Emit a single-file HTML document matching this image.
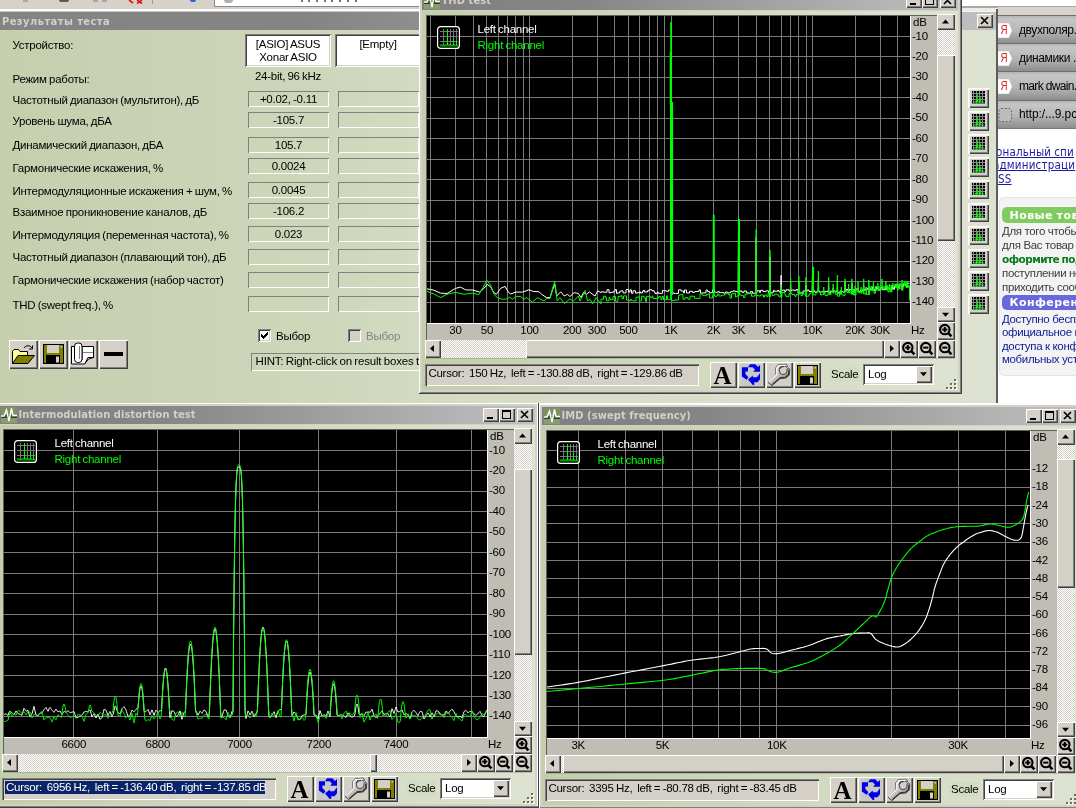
<!DOCTYPE html><html><head><meta charset="utf-8"><title>RMAA</title><style>
html,body{margin:0;padding:0;overflow:hidden;}
body{width:1076px;height:808px;overflow:hidden;position:relative;background:#d8dfc8;font-family:"Liberation Sans",sans-serif;font-size:11px;color:#000;}
div{position:absolute;box-sizing:border-box;}
svg{position:absolute;overflow:hidden;}
.t{white-space:pre;line-height:13px;font-size:11.5px;letter-spacing:-0.25px;word-spacing:-0.6px;}
.tb{white-space:pre;font-family:"DejaVu Sans Condensed","DejaVu Sans",sans-serif;font-weight:bold;font-size:11px;line-height:14px;color:#d4d0c8;}
.btn{background:#d4d0c8;box-shadow:inset 1px 1px 0 #fff,inset -1px -1px 0 #404040,inset -2px -2px 0 #808080;}
.sunk{box-shadow:inset 1px 1px 0 #808080,inset -1px -1px 0 #fff,inset 2px 2px 0 #404040,inset -2px -2px 0 #d4d0c8;}
.sunk1{box-shadow:inset 1px 1px 0 #808080,inset -1px -1px 0 #fff;}
.dith{background-color:#e9e7e3;background-image:conic-gradient(#fff 25%,#d4d0c8 0 50%,#fff 0 75%,#d4d0c8 0);background-size:2px 2px;}
.lab{white-space:pre;font-size:11px;line-height:13px;color:#000;}
</style></head><body><div id="root" style="left:0;top:0;width:1076px;height:808px;overflow:hidden;will-change:transform">
<div style="left:0px;top:0px;width:997px;height:12px;background:#d6d2ca"></div>
<div style="left:0px;top:9px;width:997px;height:2px;background:#fff"></div>
<div style="left:0px;top:11px;width:997px;height:1px;background:#c8c8c0"></div>
<div style="left:214px;top:0px;width:210px;height:7px;background:#fff;border:1px solid #8a8a8a;border-top:none"></div>
<div style="left:224px;top:0px;width:9px;height:3px;background:#b0b0b0;border-radius:0 0 5px 5px"></div>
<div style="left:301px;top:0px;width:2px;height:2px;background:#777"></div>
<div style="left:308px;top:0px;width:2px;height:2px;background:#777"></div>
<div style="left:316px;top:0px;width:2px;height:2px;background:#777"></div>
<div style="left:324px;top:0px;width:2px;height:2px;background:#777"></div>
<div style="left:331px;top:0px;width:2px;height:2px;background:#777"></div>
<div style="left:339px;top:0px;width:2px;height:2px;background:#777"></div>
<div style="left:347px;top:0px;width:2px;height:2px;background:#777"></div>
<div style="left:355px;top:0px;width:2px;height:2px;background:#777"></div>
<div style="left:23px;top:0px;width:5px;height:2px;background:#a8a8a8"></div>
<div style="left:59px;top:0px;width:10px;height:2px;background:#5a5a50;border-radius:0 0 5px 5px"></div>
<div style="left:93px;top:0px;width:5px;height:2px;background:#a8a8a8"></div>
<div style="left:102px;top:0px;width:5px;height:2px;background:#a8a8a8"></div>
<svg style="left:128px;top:0px" width="16" height="4" viewBox="0 0 16 4" ><path d="M1,0 L5,3 M9,0 L14,3.5 M14,0 L9,3.5" stroke="#e01010" stroke-width="1.6" fill="none"/></svg>
<div style="left:152px;top:0px;width:1px;height:4px;background:#9a9a9a"></div>
<div style="left:190px;top:0px;width:6px;height:2px;background:#3060e0;border-radius:0 0 3px 3px"></div>
<div style="left:0px;top:30px;width:997px;height:374px;background:linear-gradient(90deg,#c5cfae 0px,#cdd6b9 300px,#d6ddc5 500px,#dde2d0 997px)"></div>
<div style="left:0px;top:12px;width:997px;height:18px;background:linear-gradient(90deg,#848484 0px,#848484 300px,#c0c0c0 997px)"></div>
<div class="tb" style="left:2px;top:14.5px;letter-spacing:0.45px">Результаты теста</div>
<div class="btn" style="left:977px;top:14px;width:16px;height:14px;"></div><svg style="left:977px;top:14px" width="16" height="14" viewBox="0 0 16 14" ><path d="M4,3 L11,10 M11,3 L4,10" stroke="#000" stroke-width="1.6"/></svg>
<div style="left:0px;top:403px;width:1076px;height:2px;background:#fff"></div>
<div class="t" style="left:12.5px;top:39px;">Устройство:</div>
<div class="t" style="left:12.5px;top:73px;">Режим работы:</div>
<div class="t" style="left:12.5px;top:94px;">Частотный диапазон (мультитон), дБ</div>
<div class="t" style="left:12.5px;top:115px;">Уровень шума, дБА</div>
<div class="t" style="left:12.5px;top:139px;">Динамический диапазон, дБА</div>
<div class="t" style="left:12.5px;top:162px;">Гармонические искажения, %</div>
<div class="t" style="left:12.5px;top:185px;">Интермодуляционные искажения + шум, %</div>
<div class="t" style="left:12.5px;top:206px;">Взаимное проникновение каналов, дБ</div>
<div class="t" style="left:12.5px;top:229px;">Интермодуляция (переменная частота), %</div>
<div class="t" style="left:12.5px;top:251px;">Частотный диапазон (плавающий тон), дБ</div>
<div class="t" style="left:12.5px;top:274px;">Гармонические искажения (набор частот)</div>
<div class="t" style="left:12.5px;top:299px;">THD (swept freq.), %</div>
<div class="sunk" style="left:245px;top:34px;width:86px;height:33px;background:#fff"></div>
<div class="t" style="left:245px;top:38px;width:86px;text-align:center">[ASIO] ASUS
Xonar ASIO</div>
<div class="sunk" style="left:335px;top:34px;width:86px;height:33px;background:#fff"></div>
<div class="t" style="left:335px;top:38px;width:86px;text-align:center">[Empty]</div>
<div class="t" style="left:245px;top:70px;width:86px;text-align:center">24-bit, 96 kHz</div>
<div class="sunk1" style="left:248px;top:91px;width:81px;height:16px;"></div>
<div class="t" style="left:248px;top:93px;width:81px;text-align:center">+0.02, -0.11</div>
<div class="sunk1" style="left:338px;top:91px;width:81px;height:16px;"></div>
<div class="sunk1" style="left:248px;top:112px;width:81px;height:16px;"></div>
<div class="t" style="left:248px;top:114px;width:81px;text-align:center">-105.7</div>
<div class="sunk1" style="left:338px;top:112px;width:81px;height:16px;"></div>
<div class="sunk1" style="left:248px;top:137px;width:81px;height:16px;"></div>
<div class="t" style="left:248px;top:139px;width:81px;text-align:center">105.7</div>
<div class="sunk1" style="left:338px;top:137px;width:81px;height:16px;"></div>
<div class="sunk1" style="left:248px;top:158px;width:81px;height:16px;"></div>
<div class="t" style="left:248px;top:160px;width:81px;text-align:center">0.0024</div>
<div class="sunk1" style="left:338px;top:158px;width:81px;height:16px;"></div>
<div class="sunk1" style="left:248px;top:182px;width:81px;height:16px;"></div>
<div class="t" style="left:248px;top:184px;width:81px;text-align:center">0.0045</div>
<div class="sunk1" style="left:338px;top:182px;width:81px;height:16px;"></div>
<div class="sunk1" style="left:248px;top:203px;width:81px;height:16px;"></div>
<div class="t" style="left:248px;top:205px;width:81px;text-align:center">-106.2</div>
<div class="sunk1" style="left:338px;top:203px;width:81px;height:16px;"></div>
<div class="sunk1" style="left:248px;top:226px;width:81px;height:16px;"></div>
<div class="t" style="left:248px;top:228px;width:81px;text-align:center">0.023</div>
<div class="sunk1" style="left:338px;top:226px;width:81px;height:16px;"></div>
<div class="sunk1" style="left:248px;top:249px;width:81px;height:16px;"></div>
<div class="sunk1" style="left:338px;top:249px;width:81px;height:16px;"></div>
<div class="sunk1" style="left:248px;top:272px;width:81px;height:16px;"></div>
<div class="sunk1" style="left:338px;top:272px;width:81px;height:16px;"></div>
<div class="sunk1" style="left:248px;top:296px;width:81px;height:16px;"></div>
<div class="sunk1" style="left:338px;top:296px;width:81px;height:16px;"></div>
<div class="sunk" style="left:258px;top:329px;width:13px;height:13px;background:#fff"></div>
<svg style="left:258px;top:329px" width="13" height="13" viewBox="0 0 13 13" ><path d="M3.5,5.5 L5.5,7.5 L9.5,3.5 M3.5,6.5 L5.5,8.5 L9.5,4.5 M3.5,7.5 L5.5,9.5 L9.5,5.5" stroke="#000" stroke-width="1" fill="none" shape-rendering="crispEdges"/></svg>
<div class="t" style="left:276px;top:330px;">Выбор</div>
<div class="sunk" style="left:348px;top:329px;width:13px;height:13px;background:#d4d0c8"></div>
<div class="t" style="left:366px;top:330px;color:#848484">Выбор</div>
<div class="sunk1" style="left:251px;top:353px;width:200px;height:18px;"></div>
<div class="t" style="left:255.5px;top:355px;letter-spacing:-0.17px">HINT: Right-click on result boxes to</div>
<div class="btn" style="left:9px;top:340px;width:29px;height:29px;"></div>
<div class="btn" style="left:39px;top:340px;width:29px;height:29px;"></div>
<div class="btn" style="left:69px;top:340px;width:29px;height:29px;"></div>
<div class="btn" style="left:99px;top:340px;width:29px;height:29px;"></div>
<svg style="left:11px;top:343px" width="25" height="23" viewBox="0 0 25 23" ><path d="M13,5 C15,2 19,2 21,5" fill="none" stroke="#000" stroke-width="1"/><path d="M21.5,2.5 L21.5,6 L18,6" fill="none" stroke="#000" stroke-width="1"/><path d="M1.5,20.5 L1.5,8.5 L3,6.5 L7.5,6.5 L9,8.5 L16.5,8.5 L16.5,12" fill="#ffff99" stroke="#000" stroke-width="1"/><path d="M1.5,20.5 L7,12.5 L23.5,12.5 L17,20.5 Z" fill="#808000" stroke="#000" stroke-width="1"/></svg>
<svg style="left:43px;top:344px" width="21" height="20" viewBox="0 0 21 20"><rect x="0.5" y="0.5" width="20" height="19" fill="#808000" stroke="#000" stroke-width="1"/><rect x="4" y="1" width="12" height="8" fill="#d4d0c8"/><rect x="3" y="11" width="14" height="8.5" fill="#000"/><rect x="13" y="12.5" width="3" height="6" fill="#d4d0c8"/><rect x="17.5" y="2" width="1.5" height="1.5" fill="#d4d0c8"/></svg>
<svg style="left:69px;top:340px" width="29" height="29" viewBox="0 0 29 29" ><path d="M2.5,6.5 L24.5,6.5 L24.5,17.5 L19.5,19 L15.5,24 L2.5,24 Z" fill="#fff" stroke="#000" stroke-width="1"/><path d="M24.5,17.5 L19,17.5 L16,23.5" fill="none" stroke="#000" stroke-width="1"/><line x1="13" y1="12.5" x2="24" y2="12.5" stroke="#808080"/><line x1="13.5" y1="7" x2="13.5" y2="20" stroke="#808080"/><rect x="5.5" y="3" width="7.5" height="19.5" rx="3.2" ry="3.2" fill="#fff" stroke="#000" stroke-width="1"/><line x1="10.5" y1="6" x2="10.5" y2="19" stroke="#808080"/></svg>
<div style="left:104px;top:352px;width:19px;height:4px;background:#000"></div>
<div style="left:419px;top:-11px;width:543px;height:405px;background:linear-gradient(90deg,#c3ceab 0%,#d0d8bc 45%,#dde3d1 100%)"></div><div style="left:419px;top:-11px;width:543px;height:1px;background:#fff"></div><div style="left:419px;top:-10px;width:542px;height:2px;background:#d4d0c8"></div><div style="left:419px;top:-11px;width:1px;height:405px;background:#fff"></div><div style="left:420px;top:-10px;width:2px;height:403px;background:#d4d0c8"></div><div style="left:961px;top:-11px;width:1px;height:405px;background:#404040"></div><div style="left:960px;top:-10px;width:1px;height:404px;background:#808080"></div><div style="left:958px;top:-10px;width:2px;height:403px;background:#d4d0c8"></div><div style="left:419px;top:393px;width:543px;height:1px;background:#404040"></div><div style="left:420px;top:392px;width:541px;height:1px;background:#808080"></div><div style="left:421px;top:390px;width:538px;height:2px;background:#d4d0c8"></div><div style="left:422px;top:-8px;width:536px;height:18px;background:linear-gradient(90deg,#808080 0%,#858585 30%,#c0c0c0 100%)"></div><div style="left:422px;top:10px;width:536px;height:1px;background:#d4d0c8"></div><svg style="left:424px;top:-7px" width="16" height="16" viewBox="0 0 16 16" ><rect width="16" height="16" fill="#7d9263"/><rect y="8" width="16" height="2" fill="#4b5f35"/><rect y="10" width="16" height="1" fill="#2f4020"/><rect y="11" width="16" height="5" fill="#889c6c"/><polyline points="0,9 3,9 5.5,3 8,14 10.5,1.5 12,8.5 16,8.5" fill="none" stroke="#fff" stroke-width="1.4" stroke-linejoin="miter"/></svg><div class="tb" style="left:441.5px;top:-6px;letter-spacing:0.1px">THD test</div><div class="btn" style="left:906px;top:-6px;width:16px;height:14px;"></div><svg style="left:906px;top:-6px" width="16" height="14" viewBox="0 0 16 14" ><rect x="4" y="9" width="6" height="2" fill="#000"/></svg><div class="btn" style="left:922px;top:-6px;width:16px;height:14px;"></div><svg style="left:922px;top:-6px" width="16" height="14" viewBox="0 0 16 14" ><rect x="3.5" y="2.5" width="8" height="8" fill="none" stroke="#000" stroke-width="1"/><rect x="3" y="2" width="9" height="2" fill="#000"/></svg><div class="btn" style="left:940px;top:-6px;width:16px;height:14px;"></div><svg style="left:940px;top:-6px" width="16" height="14" viewBox="0 0 16 14" ><path d="M4,3 L11,10 M11,3 L4,10" stroke="#000" stroke-width="1.6"/></svg><div style="left:426px;top:15px;width:511px;height:326px;background:#c0bdb5;border-top:1px solid #606060;border-left:1px solid #606060"></div><div style="left:427px;top:16px;width:483px;height:307px;background:#000"></div><div style="left:910px;top:16px;width:1px;height:308px;background:#fff"></div><div style="left:427px;top:323px;width:483px;height:1px;background:#fff"></div><svg style="left:427px;top:16px" width="483" height="307" viewBox="0 0 483 307" ><g transform="translate(-427,-16)"><g shape-rendering="crispEdges" stroke="#7a7a7a" stroke-width="1"><line x1="430.5" y1="16" x2="430.5" y2="323"/><line x1="455.5" y1="16" x2="455.5" y2="323"/><line x1="473.5" y1="16" x2="473.5" y2="323"/><line x1="486.5" y1="16" x2="486.5" y2="323"/><line x1="498.5" y1="16" x2="498.5" y2="323"/><line x1="507.5" y1="16" x2="507.5" y2="323"/><line x1="515.5" y1="16" x2="515.5" y2="323"/><line x1="523.5" y1="16" x2="523.5" y2="323"/><line x1="529.5" y1="16" x2="529.5" y2="323"/><line x1="572.5" y1="16" x2="572.5" y2="323"/><line x1="597.5" y1="16" x2="597.5" y2="323"/><line x1="614.5" y1="16" x2="614.5" y2="323"/><line x1="628.5" y1="16" x2="628.5" y2="323"/><line x1="639.5" y1="16" x2="639.5" y2="323"/><line x1="649.5" y1="16" x2="649.5" y2="323"/><line x1="657.5" y1="16" x2="657.5" y2="323"/><line x1="664.5" y1="16" x2="664.5" y2="323"/><line x1="671.5" y1="16" x2="671.5" y2="323"/><line x1="713.5" y1="16" x2="713.5" y2="323"/><line x1="738.5" y1="16" x2="738.5" y2="323"/><line x1="756.5" y1="16" x2="756.5" y2="323"/><line x1="769.5" y1="16" x2="769.5" y2="323"/><line x1="781.5" y1="16" x2="781.5" y2="323"/><line x1="790.5" y1="16" x2="790.5" y2="323"/><line x1="798.5" y1="16" x2="798.5" y2="323"/><line x1="806.5" y1="16" x2="806.5" y2="323"/><line x1="812.5" y1="16" x2="812.5" y2="323"/><line x1="855.5" y1="16" x2="855.5" y2="323"/><line x1="880.5" y1="16" x2="880.5" y2="323"/><line x1="897.5" y1="16" x2="897.5" y2="323"/><line x1="427" y1="36.5" x2="910" y2="36.5"/><line x1="427" y1="56.5" x2="910" y2="56.5"/><line x1="427" y1="77.5" x2="910" y2="77.5"/><line x1="427" y1="97.5" x2="910" y2="97.5"/><line x1="427" y1="118.5" x2="910" y2="118.5"/><line x1="427" y1="138.5" x2="910" y2="138.5"/><line x1="427" y1="159.5" x2="910" y2="159.5"/><line x1="427" y1="179.5" x2="910" y2="179.5"/><line x1="427" y1="200.5" x2="910" y2="200.5"/><line x1="427" y1="220.5" x2="910" y2="220.5"/><line x1="427" y1="241.5" x2="910" y2="241.5"/><line x1="427" y1="261.5" x2="910" y2="261.5"/><line x1="427" y1="281.5" x2="910" y2="281.5"/><line x1="427" y1="302.5" x2="910" y2="302.5"/></g><polyline points="427.0,288.8 433.7,290.1 440.4,293.1 447.0,293.5 455.5,288.4 460.5,287.1 465.5,289.8 473.0,290.1 479.7,292.1 483.9,288.4 487.2,284.3 490.6,286.8 493.9,292.6 496.4,294.3 500.6,288.4 505.1,286.4 508.1,291.8 510.7,294.0 515.7,292.1 522.4,292.1 529.0,289.8 533.2,291.4 539.1,291.8 541.6,294.3 546.6,297.6 550.0,297.6 552.5,290.1 554.7,284.3 556.7,296.0 560.8,291.8 564.2,296.0 567.5,294.3 570.0,296.5 574.2,292.6 578.4,293.5 580.9,297.6 583.4,292.6 586.8,294.3 589.3,291.8 592.6,294.3 595.1,296.0 597.6,290.9 601.0,292.6 601.0,291.9 604.0,291.9 604.0,292.2 607.0,292.2 607.0,289.7 609.0,289.7 609.0,292.8 611.0,292.8 611.0,292.3 613.5,292.3 613.5,291.4 615.0,291.4 615.0,289.6 616.5,289.6 616.5,293.4 617.5,293.4 617.5,292.9 619.5,292.9 619.5,291.7 620.5,291.7 620.5,290.9 623.0,290.9 623.0,292.9 626.0,292.9 626.0,289.6 628.5,289.6 628.5,292.0 630.0,292.0 630.0,289.9 631.5,289.9 631.5,293.3 633.0,293.3 633.0,290.8 635.5,290.8 635.5,293.1 637.5,293.1 637.5,292.7 639.5,292.7 639.5,291.9 640.5,291.9 640.5,293.0 642.5,293.0 642.5,291.2 643.5,291.2 643.5,290.3 644.5,290.3 644.5,292.0 647.5,292.0 647.5,290.8 649.0,290.8 649.0,289.8 652.0,289.8 652.0,290.7 654.0,290.7 654.0,292.0 655.0,292.0 655.0,293.6 657.0,293.6 657.0,292.4 658.5,292.4 658.5,293.5 659.5,293.5 659.5,293.3 662.5,293.3 662.5,290.4 663.5,290.4 663.5,290.8 666.5,290.8 666.5,291.3 668.5,291.3 668.5,290.0 671.0,290.0 671.0,292.8 670.7,292.8 671.0,100.0 671.3,292.8 672.0,292.8 672.0,292.9 674.0,292.9 674.0,293.5 675.5,293.5 675.5,293.4 678.5,293.4 678.5,289.8 681.0,289.8 681.0,291.0 683.5,291.0 683.5,292.9 684.5,292.9 684.5,290.0 686.5,290.0 686.5,293.0 689.5,293.0 689.5,291.3 692.5,291.3 692.5,292.3 695.0,292.3 695.0,291.4 697.0,291.4 697.0,291.4 699.0,291.4 699.0,289.9 700.5,289.9 700.5,293.1 703.5,293.1 703.5,292.8 706.0,292.8 706.0,290.0 707.5,290.0 707.5,291.6 709.5,291.6 709.5,292.8 712.5,292.8 712.5,289.9 713.3,289.9 713.6,221.1 713.9,289.9 714.5,289.9 714.5,292.2 716.5,292.2 716.5,292.4 717.5,292.4 717.5,291.7 719.5,291.7 719.5,292.7 721.5,292.7 721.5,292.5 723.5,292.5 723.5,293.1 725.5,293.1 725.5,292.0 727.5,292.0 727.5,292.8 730.5,292.8 730.5,291.7 733.0,291.7 733.0,290.9 735.0,290.9 735.0,291.4 737.0,291.4 737.0,292.0 738.2,292.0 738.5,224.0 738.8,292.0 740.0,292.0 740.0,291.0 742.0,291.0 742.0,292.3 744.0,292.3 744.0,291.0 746.5,291.0 746.5,292.8 748.0,292.8 748.0,293.2 750.5,293.2 750.5,291.6 752.5,291.6 752.5,293.2 755.5,293.2 755.5,292.7 755.9,292.7 756.2,237.2 756.5,292.7 757.0,292.7 757.0,290.7 759.5,290.7 759.5,292.3 760.5,292.3 760.5,290.3 763.0,290.3 763.0,291.6 766.0,291.6 766.0,290.8 768.5,290.8 768.5,292.5 769.6,292.5 769.9,256.7 770.2,292.5 771.5,292.5 771.5,292.3 773.5,292.3 773.5,290.4 774.5,290.4 774.5,291.3 777.5,291.3 777.5,290.5 779.0,290.5 779.0,292.0 780.5,292.0 780.5,293.2 780.8,293.2 781.1,275.3 781.4,293.2 781.5,293.2 781.5,290.3 783.0,290.3 783.0,290.1 784.5,290.1 784.5,291.4 786.0,291.4 786.0,289.8 789.0,289.8 789.0,291.0 790.3,291.0 790.6,281.3 790.9,291.0 791.5,291.0 791.5,290.0 794.5,290.0 794.5,290.6 796.0,290.6 796.0,289.7 798.0,289.7 798.0,293.1 798.5,293.1 798.8,281.3 799.1,293.1 800.5,293.1 800.5,292.8 803.0,292.8 803.0,291.0 806.0,291.0 806.0,291.7 805.7,291.7 806.0,284.9 806.3,291.7 807.0,291.7 807.0,290.1 809.0,290.1 809.0,291.5 812.0,291.5 812.0,290.8 812.2,290.8 812.5,272.1 812.8,290.8 815.0,290.8 815.0,292.6 817.0,292.6 817.0,291.2 818.1,291.2 818.4,278.5 818.7,291.2 819.5,291.2 819.5,292.0 822.5,292.0 822.5,291.4 823.4,291.4 823.7,290.6 824.0,291.4 824.5,291.4 824.5,291.8 826.0,291.8 826.0,291.4 828.3,291.4 828.6,282.5 828.9,291.4 829.0,291.4 829.0,293.2 830.5,293.2 830.5,291.1 831.5,291.1 831.5,291.2 832.5,291.2 832.5,291.8 832.9,291.8 833.2,288.2 833.5,291.8 834.0,291.8 834.0,290.9 835.0,290.9 835.0,291.3 837.0,291.3 837.0,291.5 837.1,291.5 837.4,280.7 837.7,291.5 838.0,291.5 838.0,293.1 840.0,293.1 840.0,291.0 842.0,291.0 842.0,291.7 843.0,291.7 843.0,292.1 844.5,292.1 844.5,291.2 844.8,291.2 845.1,282.0 845.4,291.2 846.0,291.2 846.0,289.4 848.0,289.4 848.0,291.0 848.3,291.0 848.6,288.1 848.9,291.0 849.5,291.0 849.5,289.7 851.0,289.7 851.0,289.5 851.6,289.5 851.9,283.3 852.2,289.5 852.0,289.5 852.0,289.9 854.0,289.9 854.0,291.7 855.0,291.7 855.0,288.9 857.0,288.9 857.0,289.6 857.8,289.6 858.1,288.3 858.4,289.6 858.5,289.6 858.5,291.4 860.5,291.4 860.5,290.2 861.5,290.2 861.5,291.2 862.5,291.2 862.5,289.1 863.4,289.1 863.7,285.9 864.0,289.1 864.0,289.1 864.0,290.1 866.0,290.1 866.0,287.6 867.0,287.6 867.0,288.8 868.0,288.8 868.0,290.2 868.5,290.2 868.8,286.1 869.1,290.2 869.5,290.2 869.5,289.3 870.5,289.3 870.5,290.2 870.9,290.2 871.2,289.6 871.5,290.2 872.0,290.2 872.0,287.1 873.0,287.1 873.0,289.4 873.2,289.4 873.5,284.5 873.8,289.4 874.5,289.4 874.5,290.8 875.5,290.8 875.5,286.7 876.5,286.7 876.5,289.3 877.6,289.3 877.9,287.0 878.2,289.3 878.5,289.3 878.5,290.3 879.7,290.3 880.0,290.1 880.3,290.3 880.5,290.3 880.5,288.3 881.7,288.3 882.0,286.8 882.3,288.3 882.5,288.3 882.5,290.0 883.5,290.0 883.5,289.6 885.5,289.6 885.5,286.9 885.6,286.9 885.9,285.9 886.2,286.9 886.5,286.9 886.5,288.6 887.5,288.6 887.5,288.0 889.5,288.0 889.5,289.3 891.5,289.3 891.5,285.6 892.5,285.6 892.5,289.2 892.6,289.2 892.9,287.0 893.2,289.2 894.5,289.2 894.5,286.4 895.5,286.4 895.5,284.6 896.5,284.6 896.5,285.4 897.5,285.4 897.5,287.7 898.5,287.7 898.5,285.4 899.5,285.4 899.5,288.3 900.4,288.3 900.7,288.0 901.0,288.3 901.5,288.3 901.5,286.8 901.8,286.8 902.1,284.8 902.4,286.8 903.5,286.8 903.5,283.8 904.5,283.8 904.5,284.1 905.5,284.1 905.5,286.2 906.0,286.2 906.3,285.3 906.6,286.2 906.5,286.2 906.5,287.4 907.5,287.4 907.5,283.3 909.5,283.3" fill="none" stroke="#fff" stroke-width="1" stroke-linejoin="round"/><polyline points="427.0,291.3 434.5,294.3 440.7,297.6 447.0,294.3 455.5,292.3 463.8,294.3 472.2,293.1 478.9,294.6 483.0,287.6 486.9,280.4 490.6,285.1 493.9,294.3 497.3,297.6 502.3,299.3 506.5,299.0 509.8,297.1 512.3,299.3 515.7,296.3 520.7,296.5 524.0,299.3 526.5,297.6 532.4,302.2 537.4,297.6 544.1,301.0 546.6,298.5 550.0,298.5 552.5,288.4 554.7,281.7 557.2,301.0 560.0,297.6 564.5,303.5 570.0,298.8 573.4,301.3 578.4,296.0 580.1,301.0 582.6,296.0 585.1,290.4 587.6,301.0 590.1,299.3 592.6,303.8 596.0,297.6 601.0,303.8 601.0,299.2 603.5,299.2 603.5,296.3 605.5,296.3 605.5,297.5 606.5,297.5 606.5,300.9 609.0,300.9 609.0,297.5 610.0,297.5 610.0,299.7 613.0,299.7 613.0,296.5 615.5,296.5 615.5,301.2 618.0,301.2 618.0,296.4 620.5,296.4 620.5,295.8 622.0,295.8 622.0,298.5 623.5,298.5 623.5,295.9 626.5,295.9 626.5,300.2 629.0,300.2 629.0,301.0 630.0,301.0 630.0,299.5 631.5,299.5 631.5,300.8 634.0,300.8 634.0,301.0 636.0,301.0 636.0,297.2 638.5,297.2 638.5,296.7 639.5,296.7 639.5,300.8 640.5,300.8 640.5,300.9 641.5,300.9 641.5,296.3 644.0,296.3 644.0,298.0 645.5,298.0 645.5,301.3 646.5,301.3 646.5,296.2 647.5,296.2 647.5,296.7 650.5,296.7 650.5,297.5 652.0,297.5 652.0,296.3 653.0,296.3 653.0,298.5 654.0,298.5 654.0,298.5 657.0,298.5 657.0,298.0 658.5,298.0 658.5,296.7 661.0,296.7 661.0,299.7 662.0,299.7 662.0,296.5 663.5,296.5 663.5,299.8 666.5,299.8 666.5,295.8 667.5,295.8 667.5,299.6 670.5,299.6 670.5,300.0 670.7,300.0 671.0,22.0 671.3,300.0 672.0,300.0 672.0,300.6 675.0,300.6 675.0,299.7 676.0,299.7 676.0,300.1 678.5,300.1 678.5,295.3 680.0,295.3 680.0,294.6 683.0,294.6 683.0,299.3 685.0,299.3 685.0,297.7 688.0,297.7 688.0,299.2 689.0,299.2 689.0,299.2 690.0,299.2 690.0,296.2 693.0,296.2 693.0,296.3 694.5,296.3 694.5,298.3 697.5,298.3 697.5,298.5 700.0,298.5 700.0,293.6 702.0,293.6 702.0,295.1 703.0,295.1 703.0,295.3 705.5,295.3 705.5,295.5 706.5,295.5 706.5,294.4 708.5,294.4 708.5,293.9 709.5,293.9 709.5,297.9 712.5,297.9 712.5,295.4 713.3,295.4 713.6,214.4 713.9,295.4 715.0,295.4 715.0,296.5 716.5,296.5 716.5,295.7 717.5,295.7 717.5,294.0 719.0,294.0 719.0,296.0 721.5,296.0 721.5,295.2 724.5,295.2 724.5,294.1 726.5,294.1 726.5,293.3 728.5,293.3 728.5,294.5 730.0,294.5 730.0,298.1 731.5,298.1 731.5,293.8 734.5,293.8 734.5,293.2 735.5,293.2 735.5,296.9 737.0,296.9 737.0,295.9 738.2,295.9 738.5,217.0 738.8,295.9 739.0,295.9 739.0,294.2 741.0,294.2 741.0,295.6 743.5,295.6 743.5,297.5 745.0,297.5 745.0,294.1 748.0,294.1 748.0,292.8 749.0,292.8 749.0,293.1 751.5,293.1 751.5,296.2 754.5,296.2 754.5,295.2 755.9,295.2 756.2,229.5 756.5,295.2 757.0,295.2 757.0,295.5 758.5,295.5 758.5,296.0 760.5,296.0 760.5,295.0 763.5,295.0 763.5,297.1 764.5,297.1 764.5,295.1 766.5,295.1 766.5,296.4 768.0,296.4 768.0,293.2 769.0,293.2 769.0,296.7 769.6,296.7 769.9,250.0 770.2,296.7 770.5,296.7 770.5,293.2 772.0,293.2 772.0,295.3 774.5,295.3 774.5,294.2 777.5,294.2 777.5,295.0 779.0,295.0 779.0,297.0 780.8,297.0 781.1,285.4 781.4,297.0 782.0,297.0 782.0,292.5 785.0,292.5 785.0,295.1 786.0,295.1 786.0,296.6 789.0,296.6 789.0,293.6 790.3,293.6 790.6,278.2 790.9,293.6 792.0,293.6 792.0,294.7 795.0,294.7 795.0,296.4 796.0,296.4 796.0,294.7 798.5,294.7 798.8,276.0 799.1,294.7 799.0,294.7 799.0,292.2 801.0,292.2 801.0,295.5 802.5,295.5 802.5,292.4 803.5,292.4 803.5,294.1 806.0,294.1 806.0,296.3 805.7,296.3 806.0,277.2 806.3,296.3 808.5,296.3 808.5,295.2 809.5,295.2 809.5,293.6 810.5,293.6 810.5,292.9 812.2,292.9 812.5,265.9 812.8,292.9 813.0,292.9 813.0,294.9 816.0,294.9 816.0,291.8 817.5,291.8 817.5,292.1 818.1,292.1 818.4,271.0 818.7,292.1 820.5,292.1 820.5,295.0 821.5,295.0 821.5,294.6 823.4,294.6 823.7,287.0 824.0,294.6 824.0,294.6 824.0,292.5 825.0,292.5 825.0,295.4 828.0,295.4 828.0,291.8 828.3,291.8 828.6,277.2 828.9,291.8 829.0,291.8 829.0,294.6 831.0,294.6 831.0,291.6 833.0,291.6 833.0,293.1 832.9,293.1 833.2,284.0 833.5,293.1 834.0,293.1 834.0,291.4 835.5,291.4 835.5,294.3 837.1,294.3 837.4,275.0 837.7,294.3 837.5,294.3 837.5,296.2 839.5,296.2 839.5,291.7 840.5,291.7 840.5,294.5 841.1,294.5 841.4,287.0 841.7,294.5 842.0,294.5 842.0,295.0 844.0,295.0 844.0,295.8 845.0,295.8 845.0,291.4 844.8,291.4 845.1,278.9 845.4,291.4 846.0,291.4 846.0,291.1 847.0,291.1 847.0,292.6 848.0,292.6 848.0,293.0 848.3,293.0 848.6,284.0 848.9,293.0 849.0,293.0 849.0,292.4 850.0,292.4 850.0,291.7 851.0,291.7 851.0,294.3 851.6,294.3 851.9,278.9 852.2,294.3 852.5,294.3 852.5,290.4 853.5,290.4 853.5,295.0 855.0,295.0 855.0,295.0 854.8,295.0 855.1,286.0 855.4,295.0 856.0,295.0 856.0,290.3 858.0,290.3 858.0,292.3 857.8,292.3 858.1,281.5 858.4,292.3 859.5,292.3 859.5,292.8 860.7,292.8 861.0,287.0 861.3,292.8 861.0,292.8 861.0,293.1 862.0,293.1 862.0,289.6 863.5,289.6 863.5,293.9 863.4,293.9 863.7,278.9 864.0,293.9 864.5,293.9 864.5,293.7 866.0,293.7 866.0,294.5 866.0,294.5 866.3,287.0 866.6,294.5 868.0,294.5 868.0,294.6 868.5,294.6 868.8,280.0 869.1,294.6 869.5,294.6 869.5,288.2 870.5,288.2 870.5,289.5 870.9,289.5 871.2,286.0 871.5,289.5 872.5,289.5 872.5,290.9 873.2,290.9 873.5,281.5 873.8,290.9 874.0,290.9 874.0,293.3 875.5,293.3 875.5,290.2 875.5,290.2 875.8,286.0 876.1,290.2 877.5,290.2 877.5,288.9 877.6,288.9 877.9,283.0 878.2,288.9 878.5,288.9 878.5,290.1 879.7,290.1 880.0,286.0 880.3,290.1 880.5,290.1 880.5,289.6 881.7,289.6 882.0,278.9 882.3,289.6 882.5,289.6 882.5,288.7 883.5,288.7 883.5,288.5 883.7,288.5 884.0,286.0 884.3,288.5 884.5,288.5 884.5,288.3 885.5,288.3 885.5,287.3 885.6,287.3 885.9,281.5 886.2,287.3 886.5,287.3 886.5,290.3 887.4,290.3 887.7,285.0 888.0,290.3 888.0,290.3 888.0,292.0 889.0,292.0 889.0,287.9 889.2,287.9 889.5,284.0 889.8,287.9 890.0,287.9 890.0,291.9 890.9,291.9 891.2,285.0 891.5,291.9 892.0,291.9 892.0,286.6 892.6,286.6 892.9,283.0 893.2,286.6 894.0,286.6 894.0,285.4 894.2,285.4 894.5,284.5 894.8,285.4 895.5,285.4 895.5,287.8 895.8,287.8 896.1,283.5 896.4,287.8 897.5,287.8 897.5,289.5 897.4,289.5 897.7,284.0 898.0,289.5 899.0,289.5 899.0,287.3 898.9,287.3 899.2,283.0 899.5,287.3 900.0,287.3 900.0,285.9 900.4,285.9 900.7,283.5 901.0,285.9 901.0,285.9 901.0,284.4 902.0,284.4 902.0,290.3 901.8,290.3 902.1,280.0 902.4,290.3 903.0,290.3 903.0,283.9 903.2,283.9 903.5,283.0 903.8,283.9 904.5,283.9 904.5,285.5 904.6,285.5 904.9,281.5 905.2,285.5 905.5,285.5 905.5,286.6 906.0,286.6 906.3,282.0 906.6,286.6 906.5,286.6 906.5,287.4 907.3,287.4 907.6,281.0 907.9,287.4 908.5,287.4 908.5,285.3 909.5,285.3 909.5,286.0 909.5,300.5" fill="none" stroke="#00ff00" stroke-width="1" stroke-linejoin="round"/><rect x="670.8" y="22" width="1" height="32" fill="#00ff00"/><rect x="669.7" y="52" width="2" height="52" fill="#00ff00"/><rect x="670.1" y="102" width="3" height="193" fill="#00ff00"/><rect x="712.8" y="215" width="1.8" height="80" fill="#00ff00"/><rect x="738.2" y="219" width="1.8" height="75" fill="#00ff00"/><rect x="812.2" y="267" width="1.8" height="26" fill="#00ff00"/></g></svg><svg style="left:437px;top:26px" width="23" height="23" viewBox="0 0 23 23" ><rect x="0.6" y="0.6" width="21.8" height="21.8" rx="3" ry="3" fill="#000" stroke="#fff" stroke-width="1.2"/><line x1="6.5" y1="3" x2="6.5" y2="19" stroke="#787878" stroke-width="1" shape-rendering="crispEdges"/><line x1="13.5" y1="3" x2="13.5" y2="19" stroke="#787878" stroke-width="1" shape-rendering="crispEdges"/><line x1="16.5" y1="3" x2="16.5" y2="19" stroke="#787878" stroke-width="1" shape-rendering="crispEdges"/><line x1="19.5" y1="3" x2="19.5" y2="19" stroke="#787878" stroke-width="1" shape-rendering="crispEdges"/><line x1="3" y1="5.5" x2="21" y2="5.5" stroke="#787878" stroke-width="1" shape-rendering="crispEdges"/><line x1="3" y1="10.5" x2="21" y2="10.5" stroke="#787878" stroke-width="1" shape-rendering="crispEdges"/><line x1="3" y1="15.5" x2="21" y2="15.5" stroke="#787878" stroke-width="1" shape-rendering="crispEdges"/><polyline points="3,19.4 4,18.4 5,19.4 6.5,18.6 8,19.4 9.2,18.2 11.8,18.2 13,19.2 14.5,18.6 15.5,19.3 17.6,18.6 18.6,19.3 20,19 21,19.5" fill="none" stroke="#00ee00" stroke-width="0.9"/><line x1="3" y1="19.9" x2="21" y2="19.9" stroke="#00ee00" stroke-width="0.9"/><g shape-rendering="crispEdges" stroke="#00ff00" stroke-width="1"><line x1="10.5" y1="3" x2="10.5" y2="19"/><line x1="16.5" y1="12" x2="16.5" y2="19"/><line x1="19.5" y1="15" x2="19.5" y2="19"/></g></svg><div class="t" style="left:477.5px;top:22.5px;color:#fff">Left channel</div><div class="t" style="left:477.5px;top:38.5px;color:#00ff00">Right channel</div><div class="t" style="left:913px;top:16px;">dB</div><div class="t" style="left:912px;top:29.5px;">-10</div><div class="t" style="left:912px;top:49.95px;">-20</div><div class="t" style="left:912px;top:70.4px;">-30</div><div class="t" style="left:912px;top:90.85px;">-40</div><div class="t" style="left:912px;top:111.3px;">-50</div><div class="t" style="left:912px;top:131.75px;">-60</div><div class="t" style="left:912px;top:152.2px;">-70</div><div class="t" style="left:912px;top:172.65px;">-80</div><div class="t" style="left:912px;top:193.1px;">-90</div><div class="t" style="left:912px;top:213.54999999999998px;">-100</div><div class="t" style="left:912px;top:234.0px;">-110</div><div class="t" style="left:912px;top:254.45px;">-120</div><div class="t" style="left:912px;top:274.9px;">-130</div><div class="t" style="left:912px;top:295.34999999999997px;">-140</div><div class="t" style="left:425.51265754283224px;top:324px;width:60px;text-align:center">30</div><div class="t" style="left:456.90425561354664px;top:324px;width:60px;text-align:center">50</div><div class="t" style="left:499.5px;top:324px;width:60px;text-align:center">100</div><div class="t" style="left:542.0957443864534px;top:324px;width:60px;text-align:center">200</div><div class="t" style="left:567.0126575428322px;top:324px;width:60px;text-align:center">300</div><div class="t" style="left:598.4042556135466px;top:324px;width:60px;text-align:center">500</div><div class="t" style="left:641.0px;top:324px;width:60px;text-align:center">1K</div><div class="t" style="left:683.5957443864534px;top:324px;width:60px;text-align:center">2K</div><div class="t" style="left:708.5126575428322px;top:324px;width:60px;text-align:center">3K</div><div class="t" style="left:739.9042556135466px;top:324px;width:60px;text-align:center">5K</div><div class="t" style="left:782.5px;top:324px;width:60px;text-align:center">10K</div><div class="t" style="left:825.0957443864534px;top:324px;width:60px;text-align:center">20K</div><div class="t" style="left:850.0126575428322px;top:324px;width:60px;text-align:center">30K</div><div class="t" style="left:911px;top:324px;">Hz</div><div class="dith" style="left:937px;top:14px;width:18px;height:308px;"></div><div class="btn" style="left:937px;top:14px;width:18px;height:16px;"></div><svg style="left:937px;top:14px" width="18" height="16" viewBox="0 0 18 16" ><polygon points="5.0,9.5 12.0,9.5 8.5,5.5" fill="#000"/></svg><div class="btn" style="left:937px;top:55px;width:18px;height:186px;"></div><div class="btn" style="left:937px;top:306.5px;width:18px;height:15.5px;"></div><svg style="left:937px;top:306.5px" width="18" height="15.5" viewBox="0 0 18 15.5" ><polygon points="5.0,5.75 12.0,5.75 8.5,9.75" fill="#000"/></svg><div class="btn" style="left:937px;top:322px;width:18px;height:18px;"></div><svg style="left:937px;top:322px" width="18" height="18" viewBox="0 0 18 18" ><circle cx="7.8" cy="7.6" r="4.7" fill="#d4d0c8" stroke="#000" stroke-width="2.1"/><line x1="11.4" y1="11.2" x2="14.399999999999999" y2="14.399999999999999" stroke="#000" stroke-width="2.6"/><line x1="5.199999999999999" y1="7.6" x2="10.4" y2="7.6" stroke="#000" stroke-width="2"/><line x1="7.8" y1="5.0" x2="7.8" y2="10.2" stroke="#000" stroke-width="2"/></svg><div class="dith" style="left:425px;top:340px;width:459px;height:18px;"></div><div class="btn" style="left:425px;top:340px;width:16px;height:18px;"></div><svg style="left:425px;top:340px" width="16" height="18" viewBox="0 0 16 18" ><polygon points="9.0,5.0 9.0,12.0 5.0,8.5" fill="#000"/></svg><div class="btn" style="left:526px;top:340px;width:358px;height:18px;"></div><div class="btn" style="left:884px;top:340px;width:16px;height:18px;"></div><svg style="left:884px;top:340px" width="16" height="18" viewBox="0 0 16 18" ><polygon points="6.0,5.0 6.0,12.0 10.0,8.5" fill="#000"/></svg><div class="btn" style="left:900px;top:340px;width:18px;height:18px;"></div><svg style="left:900px;top:340px" width="18" height="18" viewBox="0 0 18 18" ><circle cx="7.8" cy="7.6" r="4.7" fill="#d4d0c8" stroke="#000" stroke-width="2.1"/><line x1="11.4" y1="11.2" x2="14.399999999999999" y2="14.399999999999999" stroke="#000" stroke-width="2.6"/><line x1="5.199999999999999" y1="7.6" x2="10.4" y2="7.6" stroke="#000" stroke-width="2"/><line x1="7.8" y1="5.0" x2="7.8" y2="10.2" stroke="#000" stroke-width="2"/></svg><div class="btn" style="left:918px;top:340px;width:18px;height:18px;"></div><svg style="left:918px;top:340px" width="18" height="18" viewBox="0 0 18 18" ><circle cx="7.8" cy="7.6" r="4.7" fill="#d4d0c8" stroke="#000" stroke-width="2.1"/><line x1="11.4" y1="11.2" x2="14.399999999999999" y2="14.399999999999999" stroke="#000" stroke-width="2.6"/><line x1="5.199999999999999" y1="7.6" x2="10.4" y2="7.6" stroke="#000" stroke-width="2"/></svg><div class="btn" style="left:937px;top:340px;width:18px;height:18px;"></div><svg style="left:937px;top:340px" width="18" height="18" viewBox="0 0 18 18" ><circle cx="7.8" cy="7.6" r="4.7" fill="#d4d0c8" stroke="#000" stroke-width="2.1"/><line x1="11.4" y1="11.2" x2="14.399999999999999" y2="14.399999999999999" stroke="#000" stroke-width="2.6"/><line x1="5.199999999999999" y1="7.6" x2="10.4" y2="7.6" stroke="#000" stroke-width="2"/></svg><div style="left:426px;top:358px;width:529px;height:1px;background:rgba(120,125,105,0.35)"></div><div class="sunk1" style="left:425px;top:364px;width:274px;height:22px;background:#d4d0c8"></div><div style="left:425px;top:364px;width:274px;height:22px;box-shadow:inset 1px 1px 0 #808080, inset 2px 2px 0 #404040, inset -1px -1px 0 #fff"></div><div class="t" style="left:428.4px;top:367px;">Cursor:  150 Hz,  left = -130.88 dB,  right = -129.86 dB</div><div class="btn" style="left:710px;top:362px;width:27px;height:26px;"></div><div style="left:709px;top:362.5px;width:27px;height:26px;text-align:center;font-family:'Liberation Serif',serif;font-weight:bold;font-size:25px;line-height:26px;color:#000">A</div><div class="btn" style="left:738px;top:362px;width:27px;height:26px;"></div><div style="left:741px;top:364px;width:21px;height:22px;background:#c8c8c8"></div><svg style="left:738px;top:362px" width="27" height="26" viewBox="0 0 27 26" ><g fill="#0000e6"><polygon points="10,5.3 12,2.2 17.3,2.2 20,5 22,3.1 22,9.8 15.1,9.8 17,7.8 14.8,5.3"/><polygon points="3.9,5.3 10,5.3 10,9.5 7.4,9.5 7.4,12 10.5,15.3 8.6,17.8 3.9,14.5"/><polygon points="10,17.6 14.8,13.4 14.8,15.3 19,15.3 22,11.2 22,17.3 19.5,20.3 16.2,20.3 16.2,22.9 14.8,22.9"/></g></svg><div class="btn" style="left:766px;top:362px;width:27px;height:26px;"></div><svg style="left:766px;top:362px" width="27" height="26" viewBox="0 0 27 26" ><defs><linearGradient id="wg" x1="0" y1="0" x2="1" y2="1"><stop offset="0" stop-color="#ffffff"/><stop offset="0.45" stop-color="#c8c8c8"/><stop offset="1" stop-color="#707070"/></linearGradient></defs><path d="M2,20.2 L10,12.8 L9.8,5.9 L12.3,2.8 L20.1,2.2 L21.5,3.6 L20.9,5.3 L18.4,3.9 L14.5,4.5 L13.1,7.3 L13.9,11.2 L16.2,12.5 L19.5,12 L20.9,9.8 L20.9,7.3 L22.6,5.9 L23.7,7.3 L23.4,12.8 L20.4,15.9 L13.9,16.7 L5.8,23.7 Z" fill="url(#wg)" stroke="#484848" stroke-width="1" stroke-linejoin="round"/><path d="M2.6,19.8 L10.8,12.4 L10.6,6.2 L12.8,3.6 L19.6,3.1" fill="none" stroke="#fff" stroke-width="1.1"/><path d="M6.2,22.6 L14.2,15.8 L20,15 L22.6,12.4 L22.8,7.8" fill="none" stroke="#303030" stroke-width="1.1"/><path d="M13.6,7.4 L14.8,5 L18,4.6" fill="none" stroke="#303030" stroke-width="1"/></svg><div class="btn" style="left:794px;top:362px;width:27px;height:26px;"></div><svg style="left:797px;top:365px" width="21" height="20" viewBox="0 0 21 20"><rect x="0.5" y="0.5" width="20" height="19" fill="#808000" stroke="#000" stroke-width="1"/><rect x="4" y="1" width="12" height="8" fill="#d4d0c8"/><rect x="3" y="11" width="14" height="8.5" fill="#000"/><rect x="13" y="12.5" width="3" height="6" fill="#d4d0c8"/><rect x="17.5" y="2" width="1.5" height="1.5" fill="#d4d0c8"/></svg><div style="left:829px;top:367px;width:30px;height:15px;background:#d3dbc2"></div><div class="t" style="left:831px;top:368px;">Scale</div><div class="sunk" style="left:863px;top:364px;width:71px;height:20.5px;background:#fff"></div><div class="t" style="left:868px;top:368px;">Log</div><div class="btn" style="left:916px;top:366px;width:16px;height:16.5px;"></div><svg style="left:916px;top:366px" width="16" height="16.5" viewBox="0 0 16 16.5" ><polygon points="4.0,6.25 11.0,6.25 7.5,10.25" fill="#000"/></svg><svg style="left:946px;top:378.5px" width="12" height="12" viewBox="0 0 12 12" ><rect x="9" y="1" width="2" height="2" fill="#fff"/><rect x="8" y="0" width="2" height="2" fill="#707040"/><rect x="5" y="5" width="2" height="2" fill="#fff"/><rect x="4" y="4" width="2" height="2" fill="#707040"/><rect x="9" y="5" width="2" height="2" fill="#fff"/><rect x="8" y="4" width="2" height="2" fill="#707040"/><rect x="1" y="9" width="2" height="2" fill="#fff"/><rect x="0" y="8" width="2" height="2" fill="#707040"/><rect x="5" y="9" width="2" height="2" fill="#fff"/><rect x="4" y="8" width="2" height="2" fill="#707040"/><rect x="9" y="9" width="2" height="2" fill="#fff"/><rect x="8" y="8" width="2" height="2" fill="#707040"/></svg>
<div style="left:962px;top:0px;width:114px;height:7px;background:#fff"></div>
<div style="left:962px;top:6px;width:114px;height:2px;background:#a8a8a8"></div>
<div style="left:962px;top:8px;width:114px;height:3px;background:#ecebe6"></div>
<div style="left:962px;top:11px;width:36px;height:1px;background:#f4f4f0"></div>
<div style="left:968px;top:88.0px;width:21px;height:19.5px;background:#d4d0c8;box-shadow:inset 1px 1px 0 #fff,inset 2px 2px 0 #f4f2ee,inset -1px -1px 0 #404040,inset -2px -2px 0 #808080"></div><svg style="left:971.5px;top:91.2px" width="13" height="12.5" viewBox="0 0 13 12.5" ><rect width="13" height="12.5" fill="#000"/><line x1="1.5" y1="0" x2="1.5" y2="12.5" stroke="#8c8c8c" stroke-width="1" shape-rendering="crispEdges"/><line x1="4.5" y1="0" x2="4.5" y2="12.5" stroke="#8c8c8c" stroke-width="1" shape-rendering="crispEdges"/><line x1="7.5" y1="0" x2="7.5" y2="12.5" stroke="#8c8c8c" stroke-width="1" shape-rendering="crispEdges"/><line x1="10.5" y1="0" x2="10.5" y2="12.5" stroke="#8c8c8c" stroke-width="1" shape-rendering="crispEdges"/><line x1="0" y1="2.5" x2="13" y2="2.5" stroke="#8c8c8c" stroke-width="1" shape-rendering="crispEdges"/><line x1="0" y1="5.5" x2="13" y2="5.5" stroke="#8c8c8c" stroke-width="1" shape-rendering="crispEdges"/><line x1="0" y1="8.5" x2="13" y2="8.5" stroke="#8c8c8c" stroke-width="1" shape-rendering="crispEdges"/><path d="M1,11 H12.5 M5.2,2.5 V10.5 M8.7,6.5 V10.5 M3.5,10 H6.5" fill="none" stroke="#00ff00" stroke-width="1.1"/></svg>
<div style="left:968px;top:111.0px;width:21px;height:19.5px;background:#d4d0c8;box-shadow:inset 1px 1px 0 #fff,inset 2px 2px 0 #f4f2ee,inset -1px -1px 0 #404040,inset -2px -2px 0 #808080"></div><svg style="left:971.5px;top:114.2px" width="13" height="12.5" viewBox="0 0 13 12.5" ><rect width="13" height="12.5" fill="#000"/><line x1="1.5" y1="0" x2="1.5" y2="12.5" stroke="#8c8c8c" stroke-width="1" shape-rendering="crispEdges"/><line x1="4.5" y1="0" x2="4.5" y2="12.5" stroke="#8c8c8c" stroke-width="1" shape-rendering="crispEdges"/><line x1="7.5" y1="0" x2="7.5" y2="12.5" stroke="#8c8c8c" stroke-width="1" shape-rendering="crispEdges"/><line x1="10.5" y1="0" x2="10.5" y2="12.5" stroke="#8c8c8c" stroke-width="1" shape-rendering="crispEdges"/><line x1="0" y1="2.5" x2="13" y2="2.5" stroke="#8c8c8c" stroke-width="1" shape-rendering="crispEdges"/><line x1="0" y1="5.5" x2="13" y2="5.5" stroke="#8c8c8c" stroke-width="1" shape-rendering="crispEdges"/><line x1="0" y1="8.5" x2="13" y2="8.5" stroke="#8c8c8c" stroke-width="1" shape-rendering="crispEdges"/><path d="M1,11 H12.5 M5.2,2.5 V10.5 M8.7,6.5 V10.5 M3.5,10 H6.5" fill="none" stroke="#00ff00" stroke-width="1.1"/></svg>
<div style="left:968px;top:134.0px;width:21px;height:19.5px;background:#d4d0c8;box-shadow:inset 1px 1px 0 #fff,inset 2px 2px 0 #f4f2ee,inset -1px -1px 0 #404040,inset -2px -2px 0 #808080"></div><svg style="left:971.5px;top:137.2px" width="13" height="12.5" viewBox="0 0 13 12.5" ><rect width="13" height="12.5" fill="#000"/><line x1="1.5" y1="0" x2="1.5" y2="12.5" stroke="#8c8c8c" stroke-width="1" shape-rendering="crispEdges"/><line x1="4.5" y1="0" x2="4.5" y2="12.5" stroke="#8c8c8c" stroke-width="1" shape-rendering="crispEdges"/><line x1="7.5" y1="0" x2="7.5" y2="12.5" stroke="#8c8c8c" stroke-width="1" shape-rendering="crispEdges"/><line x1="10.5" y1="0" x2="10.5" y2="12.5" stroke="#8c8c8c" stroke-width="1" shape-rendering="crispEdges"/><line x1="0" y1="2.5" x2="13" y2="2.5" stroke="#8c8c8c" stroke-width="1" shape-rendering="crispEdges"/><line x1="0" y1="5.5" x2="13" y2="5.5" stroke="#8c8c8c" stroke-width="1" shape-rendering="crispEdges"/><line x1="0" y1="8.5" x2="13" y2="8.5" stroke="#8c8c8c" stroke-width="1" shape-rendering="crispEdges"/><path d="M1,11 H12.5 M5.2,2.5 V10.5 M8.7,6.5 V10.5 M3.5,10 H6.5" fill="none" stroke="#00ff00" stroke-width="1.1"/></svg>
<div style="left:968px;top:157.0px;width:21px;height:19.5px;background:#d4d0c8;box-shadow:inset 1px 1px 0 #fff,inset 2px 2px 0 #f4f2ee,inset -1px -1px 0 #404040,inset -2px -2px 0 #808080"></div><svg style="left:971.5px;top:160.2px" width="13" height="12.5" viewBox="0 0 13 12.5" ><rect width="13" height="12.5" fill="#000"/><line x1="1.5" y1="0" x2="1.5" y2="12.5" stroke="#8c8c8c" stroke-width="1" shape-rendering="crispEdges"/><line x1="4.5" y1="0" x2="4.5" y2="12.5" stroke="#8c8c8c" stroke-width="1" shape-rendering="crispEdges"/><line x1="7.5" y1="0" x2="7.5" y2="12.5" stroke="#8c8c8c" stroke-width="1" shape-rendering="crispEdges"/><line x1="10.5" y1="0" x2="10.5" y2="12.5" stroke="#8c8c8c" stroke-width="1" shape-rendering="crispEdges"/><line x1="0" y1="2.5" x2="13" y2="2.5" stroke="#8c8c8c" stroke-width="1" shape-rendering="crispEdges"/><line x1="0" y1="5.5" x2="13" y2="5.5" stroke="#8c8c8c" stroke-width="1" shape-rendering="crispEdges"/><line x1="0" y1="8.5" x2="13" y2="8.5" stroke="#8c8c8c" stroke-width="1" shape-rendering="crispEdges"/><path d="M1,11 H12.5 M5.2,2.5 V10.5 M8.7,6.5 V10.5 M3.5,10 H6.5" fill="none" stroke="#00ff00" stroke-width="1.1"/></svg>
<div style="left:968px;top:179.5px;width:21px;height:19.5px;background:#d4d0c8;box-shadow:inset 1px 1px 0 #fff,inset 2px 2px 0 #f4f2ee,inset -1px -1px 0 #404040,inset -2px -2px 0 #808080"></div><svg style="left:971.5px;top:182.7px" width="13" height="12.5" viewBox="0 0 13 12.5" ><rect width="13" height="12.5" fill="#000"/><line x1="1.5" y1="0" x2="1.5" y2="12.5" stroke="#8c8c8c" stroke-width="1" shape-rendering="crispEdges"/><line x1="4.5" y1="0" x2="4.5" y2="12.5" stroke="#8c8c8c" stroke-width="1" shape-rendering="crispEdges"/><line x1="7.5" y1="0" x2="7.5" y2="12.5" stroke="#8c8c8c" stroke-width="1" shape-rendering="crispEdges"/><line x1="10.5" y1="0" x2="10.5" y2="12.5" stroke="#8c8c8c" stroke-width="1" shape-rendering="crispEdges"/><line x1="0" y1="2.5" x2="13" y2="2.5" stroke="#8c8c8c" stroke-width="1" shape-rendering="crispEdges"/><line x1="0" y1="5.5" x2="13" y2="5.5" stroke="#8c8c8c" stroke-width="1" shape-rendering="crispEdges"/><line x1="0" y1="8.5" x2="13" y2="8.5" stroke="#8c8c8c" stroke-width="1" shape-rendering="crispEdges"/><path d="M1,11 H12.5 M5.2,2.5 V10.5 M8.7,6.5 V10.5 M3.5,10 H6.5" fill="none" stroke="#00ff00" stroke-width="1.1"/></svg>
<div style="left:968px;top:202.5px;width:21px;height:19.5px;background:#d4d0c8;box-shadow:inset 1px 1px 0 #fff,inset 2px 2px 0 #f4f2ee,inset -1px -1px 0 #404040,inset -2px -2px 0 #808080"></div><svg style="left:971.5px;top:205.7px" width="13" height="12.5" viewBox="0 0 13 12.5" ><rect width="13" height="12.5" fill="#000"/><line x1="1.5" y1="0" x2="1.5" y2="12.5" stroke="#8c8c8c" stroke-width="1" shape-rendering="crispEdges"/><line x1="4.5" y1="0" x2="4.5" y2="12.5" stroke="#8c8c8c" stroke-width="1" shape-rendering="crispEdges"/><line x1="7.5" y1="0" x2="7.5" y2="12.5" stroke="#8c8c8c" stroke-width="1" shape-rendering="crispEdges"/><line x1="10.5" y1="0" x2="10.5" y2="12.5" stroke="#8c8c8c" stroke-width="1" shape-rendering="crispEdges"/><line x1="0" y1="2.5" x2="13" y2="2.5" stroke="#8c8c8c" stroke-width="1" shape-rendering="crispEdges"/><line x1="0" y1="5.5" x2="13" y2="5.5" stroke="#8c8c8c" stroke-width="1" shape-rendering="crispEdges"/><line x1="0" y1="8.5" x2="13" y2="8.5" stroke="#8c8c8c" stroke-width="1" shape-rendering="crispEdges"/><path d="M1,11 H12.5 M5.2,2.5 V10.5 M8.7,6.5 V10.5 M3.5,10 H6.5" fill="none" stroke="#00ff00" stroke-width="1.1"/></svg>
<div style="left:968px;top:225.5px;width:21px;height:19.5px;background:#d4d0c8;box-shadow:inset 1px 1px 0 #fff,inset 2px 2px 0 #f4f2ee,inset -1px -1px 0 #404040,inset -2px -2px 0 #808080"></div><svg style="left:971.5px;top:228.7px" width="13" height="12.5" viewBox="0 0 13 12.5" ><rect width="13" height="12.5" fill="#000"/><line x1="1.5" y1="0" x2="1.5" y2="12.5" stroke="#8c8c8c" stroke-width="1" shape-rendering="crispEdges"/><line x1="4.5" y1="0" x2="4.5" y2="12.5" stroke="#8c8c8c" stroke-width="1" shape-rendering="crispEdges"/><line x1="7.5" y1="0" x2="7.5" y2="12.5" stroke="#8c8c8c" stroke-width="1" shape-rendering="crispEdges"/><line x1="10.5" y1="0" x2="10.5" y2="12.5" stroke="#8c8c8c" stroke-width="1" shape-rendering="crispEdges"/><line x1="0" y1="2.5" x2="13" y2="2.5" stroke="#8c8c8c" stroke-width="1" shape-rendering="crispEdges"/><line x1="0" y1="5.5" x2="13" y2="5.5" stroke="#8c8c8c" stroke-width="1" shape-rendering="crispEdges"/><line x1="0" y1="8.5" x2="13" y2="8.5" stroke="#8c8c8c" stroke-width="1" shape-rendering="crispEdges"/><path d="M1,11 H12.5 M5.2,2.5 V10.5 M8.7,6.5 V10.5 M3.5,10 H6.5" fill="none" stroke="#00ff00" stroke-width="1.1"/></svg>
<div style="left:968px;top:248.5px;width:21px;height:19.5px;background:#d4d0c8;box-shadow:inset 1px 1px 0 #fff,inset 2px 2px 0 #f4f2ee,inset -1px -1px 0 #404040,inset -2px -2px 0 #808080"></div><svg style="left:971.5px;top:251.7px" width="13" height="12.5" viewBox="0 0 13 12.5" ><rect width="13" height="12.5" fill="#000"/><line x1="1.5" y1="0" x2="1.5" y2="12.5" stroke="#8c8c8c" stroke-width="1" shape-rendering="crispEdges"/><line x1="4.5" y1="0" x2="4.5" y2="12.5" stroke="#8c8c8c" stroke-width="1" shape-rendering="crispEdges"/><line x1="7.5" y1="0" x2="7.5" y2="12.5" stroke="#8c8c8c" stroke-width="1" shape-rendering="crispEdges"/><line x1="10.5" y1="0" x2="10.5" y2="12.5" stroke="#8c8c8c" stroke-width="1" shape-rendering="crispEdges"/><line x1="0" y1="2.5" x2="13" y2="2.5" stroke="#8c8c8c" stroke-width="1" shape-rendering="crispEdges"/><line x1="0" y1="5.5" x2="13" y2="5.5" stroke="#8c8c8c" stroke-width="1" shape-rendering="crispEdges"/><line x1="0" y1="8.5" x2="13" y2="8.5" stroke="#8c8c8c" stroke-width="1" shape-rendering="crispEdges"/><path d="M1,11 H12.5 M5.2,2.5 V10.5 M8.7,6.5 V10.5 M3.5,10 H6.5" fill="none" stroke="#00ff00" stroke-width="1.1"/></svg>
<div style="left:968px;top:271.0px;width:21px;height:19.5px;background:#d4d0c8;box-shadow:inset 1px 1px 0 #fff,inset 2px 2px 0 #f4f2ee,inset -1px -1px 0 #404040,inset -2px -2px 0 #808080"></div><svg style="left:971.5px;top:274.2px" width="13" height="12.5" viewBox="0 0 13 12.5" ><rect width="13" height="12.5" fill="#000"/><line x1="1.5" y1="0" x2="1.5" y2="12.5" stroke="#8c8c8c" stroke-width="1" shape-rendering="crispEdges"/><line x1="4.5" y1="0" x2="4.5" y2="12.5" stroke="#8c8c8c" stroke-width="1" shape-rendering="crispEdges"/><line x1="7.5" y1="0" x2="7.5" y2="12.5" stroke="#8c8c8c" stroke-width="1" shape-rendering="crispEdges"/><line x1="10.5" y1="0" x2="10.5" y2="12.5" stroke="#8c8c8c" stroke-width="1" shape-rendering="crispEdges"/><line x1="0" y1="2.5" x2="13" y2="2.5" stroke="#8c8c8c" stroke-width="1" shape-rendering="crispEdges"/><line x1="0" y1="5.5" x2="13" y2="5.5" stroke="#8c8c8c" stroke-width="1" shape-rendering="crispEdges"/><line x1="0" y1="8.5" x2="13" y2="8.5" stroke="#8c8c8c" stroke-width="1" shape-rendering="crispEdges"/><path d="M1,11 H12.5 M5.2,2.5 V10.5 M8.7,6.5 V10.5 M3.5,10 H6.5" fill="none" stroke="#00ff00" stroke-width="1.1"/></svg>
<div style="left:968px;top:294.0px;width:21px;height:19.5px;background:#d4d0c8;box-shadow:inset 1px 1px 0 #fff,inset 2px 2px 0 #f4f2ee,inset -1px -1px 0 #404040,inset -2px -2px 0 #808080"></div><svg style="left:971.5px;top:297.2px" width="13" height="12.5" viewBox="0 0 13 12.5" ><rect width="13" height="12.5" fill="#000"/><line x1="1.5" y1="0" x2="1.5" y2="12.5" stroke="#8c8c8c" stroke-width="1" shape-rendering="crispEdges"/><line x1="4.5" y1="0" x2="4.5" y2="12.5" stroke="#8c8c8c" stroke-width="1" shape-rendering="crispEdges"/><line x1="7.5" y1="0" x2="7.5" y2="12.5" stroke="#8c8c8c" stroke-width="1" shape-rendering="crispEdges"/><line x1="10.5" y1="0" x2="10.5" y2="12.5" stroke="#8c8c8c" stroke-width="1" shape-rendering="crispEdges"/><line x1="0" y1="2.5" x2="13" y2="2.5" stroke="#8c8c8c" stroke-width="1" shape-rendering="crispEdges"/><line x1="0" y1="5.5" x2="13" y2="5.5" stroke="#8c8c8c" stroke-width="1" shape-rendering="crispEdges"/><line x1="0" y1="8.5" x2="13" y2="8.5" stroke="#8c8c8c" stroke-width="1" shape-rendering="crispEdges"/><path d="M1,11 H12.5 M5.2,2.5 V10.5 M8.7,6.5 V10.5 M3.5,10 H6.5" fill="none" stroke="#00ff00" stroke-width="1.1"/></svg>
<div style="left:996px;top:9px;width:2px;height:394px;background:#5c5c5c"></div>
<div style="left:998px;top:7px;width:80px;height:9px;background:#d8d4cc"></div>
<div style="left:998px;top:15px;width:80px;height:114px;background:#6e6e6e"></div>
<div style="left:998px;top:16px;width:80px;height:27px;background:linear-gradient(180deg,#b4b4b4 0%,#c6c6c6 12%,#b6b6b6 55%,#8e8e8e 100%)"></div>
<svg style="left:998px;top:22.5px" width="15" height="15" viewBox="0 0 15 15" ><path d="M0,0.3 L10.8,0.3 L14,7.5 L10.8,14.7 L0,14.7 Z" fill="#fff"/></svg>
<div style="left:998.5px;top:23.0px;width:10px;text-align:center;font-family:'Liberation Sans',sans-serif;font-size:12.5px;line-height:14px;color:#e02020;transform:scaleX(0.78)">Я</div>
<div class="t" style="left:1019px;top:22.5px;font-size:12px;line-height:14px;letter-spacing:-0.4px;word-spacing:0;color:#000">двухполяр...</div>
<div style="left:998px;top:44px;width:80px;height:27px;background:linear-gradient(180deg,#b4b4b4 0%,#c6c6c6 12%,#b6b6b6 55%,#8e8e8e 100%)"></div>
<svg style="left:998px;top:50.5px" width="15" height="15" viewBox="0 0 15 15" ><path d="M0,0.3 L10.8,0.3 L14,7.5 L10.8,14.7 L0,14.7 Z" fill="#fff"/></svg>
<div style="left:998.5px;top:51.0px;width:10px;text-align:center;font-family:'Liberation Sans',sans-serif;font-size:12.5px;line-height:14px;color:#e02020;transform:scaleX(0.78)">Я</div>
<div class="t" style="left:1019px;top:50.5px;font-size:12px;line-height:14px;letter-spacing:-0.36px;word-spacing:0;color:#000">динамики ...</div>
<div style="left:998px;top:72px;width:80px;height:27.5px;background:linear-gradient(180deg,#b4b4b4 0%,#c6c6c6 12%,#b6b6b6 55%,#8e8e8e 100%)"></div>
<svg style="left:998px;top:78.75px" width="15" height="15" viewBox="0 0 15 15" ><path d="M0,0.3 L10.8,0.3 L14,7.5 L10.8,14.7 L0,14.7 Z" fill="#fff"/></svg>
<div style="left:998.5px;top:79.25px;width:10px;text-align:center;font-family:'Liberation Sans',sans-serif;font-size:12.5px;line-height:14px;color:#e02020;transform:scaleX(0.78)">Я</div>
<div class="t" style="left:1019px;top:78.75px;font-size:12px;line-height:14px;letter-spacing:-0.65px;word-spacing:0;color:#000">mark dwain...</div>
<div style="left:998px;top:100.5px;width:80px;height:27px;background:linear-gradient(180deg,#b4b4b4 0%,#c6c6c6 12%,#b6b6b6 55%,#8e8e8e 100%)"></div>
<svg style="left:998px;top:107.5px" width="15" height="14" viewBox="0 0 15 14" ><rect x="1" y="0.5" width="12.5" height="13" rx="2.5" fill="#bcbcbc" stroke="#6a6a6a" stroke-width="1" stroke-dasharray="2 1.5"/></svg>
<div class="t" style="left:1019px;top:107.0px;font-size:12px;line-height:14px;letter-spacing:-0.1px;word-spacing:0;color:#000">http:/...9.pc</div>
<div style="left:998px;top:127.5px;width:80px;height:1.5px;background:#7a7a7a"></div>
<div style="left:998px;top:129px;width:80px;height:274px;background:#fff"></div>
<div style="left:998px;top:140px;width:78px;height:40px;overflow:hidden"><div class="t" style="left:-8px;top:6px;font-family:'DejaVu Sans Condensed','DejaVu Sans',sans-serif;font-size:11.5px;line-height:13.4px;color:#1a1aa0;text-decoration:underline;letter-spacing:0.2px">сональный спи
 администраци</div></div>
<div class="t" style="left:998px;top:172.5px;font-family:'DejaVu Sans Condensed','DejaVu Sans',sans-serif;font-size:11.5px;line-height:13.4px;color:#1a1aa0;text-decoration:underline;letter-spacing:0.2px">SS</div>
<div style="left:998.5px;top:197px;width:90px;height:179px;background:#f3f3f3;border:1px solid #e4e4e4;border-radius:5px"></div>
<div style="left:1002px;top:207px;width:90px;height:16px;background:#80cc60;border-radius:5px"></div>
<div class="t" style="left:1009.5px;top:207.5px;font-family:'DejaVu Sans',sans-serif;font-weight:bold;font-size:11px;line-height:15px;color:#fff;letter-spacing:0.45px">Новые тов</div>
<div class="t" style="left:1002px;top:224px;font-size:11.5px;line-height:14px;letter-spacing:-0.35px;word-spacing:0px;color:#3c3c3c">Для того чтобы
для Вас товар в</div>
<div class="t" style="left:1002px;top:252px;font-family:'DejaVu Sans',sans-serif;font-weight:bold;font-size:10.5px;line-height:14px;color:#0a7a1a;letter-spacing:-0.55px">оформите под</div>
<div class="t" style="left:1002px;top:266px;font-size:11.5px;line-height:14px;letter-spacing:-0.35px;word-spacing:0px;color:#3c3c3c">поступлении но
приходить сооб</div>
<div style="left:1002px;top:294.5px;width:90px;height:15.5px;background:#6868dc;border-radius:5px"></div>
<div class="t" style="left:1009.5px;top:294.5px;font-family:'DejaVu Sans',sans-serif;font-weight:bold;font-size:11px;line-height:15px;color:#fff;letter-spacing:0.45px">Конферен</div>
<div class="t" style="left:1002px;top:312.5px;font-size:11.5px;line-height:14px;letter-spacing:-0.35px;word-spacing:0px;color:#3c3c3c;color:#10209c;line-height:13.6px">Доступно беспл
официальное п
доступа к конф
мобильных уст</div>
<div style="left:-4px;top:403px;width:543px;height:405px;background:linear-gradient(90deg,#c3ceab 0%,#d0d8bc 45%,#dde3d1 100%)"></div><div style="left:-4px;top:403px;width:543px;height:1px;background:#fff"></div><div style="left:-4px;top:404px;width:542px;height:2px;background:#d4d0c8"></div><div style="left:-4px;top:403px;width:1px;height:405px;background:#fff"></div><div style="left:-3px;top:404px;width:2px;height:403px;background:#d4d0c8"></div><div style="left:538px;top:403px;width:1px;height:405px;background:#404040"></div><div style="left:537px;top:404px;width:1px;height:404px;background:#fff"></div><div style="left:535px;top:404px;width:2px;height:403px;background:#d4d0c8"></div><div style="left:-4px;top:807px;width:543px;height:1px;background:#404040"></div><div style="left:-3px;top:806px;width:541px;height:1px;background:#808080"></div><div style="left:-2px;top:804px;width:538px;height:2px;background:#d4d0c8"></div><div style="left:-1px;top:406px;width:536px;height:18px;background:linear-gradient(90deg,#808080 0%,#858585 30%,#c0c0c0 100%)"></div><div style="left:-1px;top:424px;width:536px;height:1px;background:#d4d0c8"></div><svg style="left:1px;top:407px" width="16" height="16" viewBox="0 0 16 16" ><rect width="16" height="16" fill="#7d9263"/><rect y="8" width="16" height="2" fill="#4b5f35"/><rect y="10" width="16" height="1" fill="#2f4020"/><rect y="11" width="16" height="5" fill="#889c6c"/><polyline points="0,9 3,9 5.5,3 8,14 10.5,1.5 12,8.5 16,8.5" fill="none" stroke="#fff" stroke-width="1.4" stroke-linejoin="miter"/></svg><div class="tb" style="left:18.5px;top:408px;letter-spacing:0.1px">Intermodulation distortion test</div><div class="btn" style="left:483px;top:408px;width:16px;height:14px;"></div><svg style="left:483px;top:408px" width="16" height="14" viewBox="0 0 16 14" ><rect x="4" y="9" width="6" height="2" fill="#000"/></svg><div class="btn" style="left:499px;top:408px;width:16px;height:14px;"></div><svg style="left:499px;top:408px" width="16" height="14" viewBox="0 0 16 14" ><rect x="3.5" y="2.5" width="8" height="8" fill="none" stroke="#000" stroke-width="1"/><rect x="3" y="2" width="9" height="2" fill="#000"/></svg><div class="btn" style="left:517px;top:408px;width:16px;height:14px;"></div><svg style="left:517px;top:408px" width="16" height="14" viewBox="0 0 16 14" ><path d="M4,3 L11,10 M11,3 L4,10" stroke="#000" stroke-width="1.6"/></svg><div style="left:3px;top:429px;width:511px;height:326px;background:#c0bdb5;border-top:1px solid #606060;border-left:1px solid #606060"></div><div style="left:4px;top:430px;width:483px;height:307px;background:#000"></div><div style="left:487px;top:430px;width:1px;height:308px;background:#fff"></div><div style="left:4px;top:737px;width:483px;height:1px;background:#fff"></div><svg style="left:4px;top:430px" width="483" height="307" viewBox="0 0 483 307" ><g transform="translate(-4,-430)"><g shape-rendering="crispEdges" stroke="#7a7a7a" stroke-width="1"><line x1="73.5" y1="430" x2="73.5" y2="737"/><line x1="157.5" y1="430" x2="157.5" y2="737"/><line x1="239.5" y1="430" x2="239.5" y2="737"/><line x1="318.5" y1="430" x2="318.5" y2="737"/><line x1="396.5" y1="430" x2="396.5" y2="737"/><line x1="471.5" y1="430" x2="471.5" y2="737"/><line x1="4" y1="450.5" x2="487" y2="450.5"/><line x1="4" y1="470.5" x2="487" y2="470.5"/><line x1="4" y1="491.5" x2="487" y2="491.5"/><line x1="4" y1="511.5" x2="487" y2="511.5"/><line x1="4" y1="532.5" x2="487" y2="532.5"/><line x1="4" y1="552.5" x2="487" y2="552.5"/><line x1="4" y1="573.5" x2="487" y2="573.5"/><line x1="4" y1="593.5" x2="487" y2="593.5"/><line x1="4" y1="614.5" x2="487" y2="614.5"/><line x1="4" y1="634.5" x2="487" y2="634.5"/><line x1="4" y1="655.5" x2="487" y2="655.5"/><line x1="4" y1="675.5" x2="487" y2="675.5"/><line x1="4" y1="696.5" x2="487" y2="696.5"/><line x1="4" y1="716.5" x2="487" y2="716.5"/></g><polyline points="4.0,714.4 4.5,714.3 5.0,714.1 5.5,713.9 6.0,713.8 6.5,714.2 7.0,714.6 7.5,715.0 8.0,715.4 8.5,713.9 9.0,712.5 9.5,711.8 10.0,711.0 10.5,711.5 11.0,711.9 11.5,712.3 12.0,712.8 12.5,713.3 13.0,713.8 13.5,714.3 14.0,714.9 14.5,713.9 15.0,712.9 15.5,711.9 16.0,710.9 16.5,711.6 17.0,712.2 17.5,712.9 18.0,713.6 18.5,713.8 19.0,714.0 19.5,714.1 20.0,714.3 20.5,714.5 21.0,714.8 21.5,715.0 22.0,715.3 22.5,713.5 23.0,711.8 23.5,710.0 24.0,708.3 24.5,709.0 25.0,709.8 25.5,710.5 26.0,711.2 26.5,711.0 27.0,710.7 27.5,710.5 28.0,710.2 28.5,712.1 29.0,714.0 29.5,715.3 30.0,716.5 30.5,715.9 31.0,715.2 31.5,714.6 32.0,713.9 32.5,712.0 33.0,710.1 33.5,708.2 34.0,706.4 34.5,708.6 35.0,710.8 35.5,713.0 36.0,715.2 36.5,715.3 37.0,715.3 37.5,715.3 38.0,715.3 38.5,714.7 39.0,714.0 39.5,713.4 40.0,712.9 40.5,713.0 41.0,713.0 41.5,713.1 42.0,713.2 42.5,712.3 43.0,711.4 43.5,710.5 44.0,709.6 44.5,709.1 45.0,708.5 45.5,708.0 46.0,707.4 46.5,708.4 47.0,709.4 47.5,710.3 48.0,711.3 48.5,710.0 49.0,708.7 49.5,708.0 50.0,707.4 50.5,708.1 51.0,708.8 51.5,709.5 52.0,710.2 52.5,710.7 53.0,711.2 53.5,711.8 54.0,712.3 54.5,711.5 55.0,710.7 55.5,709.9 56.0,709.1 56.5,709.8 57.0,710.5 57.5,711.2 58.0,711.9 58.5,711.6 59.0,711.2 59.5,711.1 60.0,711.0 60.5,711.9 61.0,712.8 61.5,713.7 62.0,714.5 62.5,713.7 63.0,712.9 63.5,712.2 64.0,711.4 64.5,711.6 65.0,711.8 65.5,712.1 66.0,712.3 66.5,711.9 67.0,711.5 67.5,711.2 68.0,710.8 68.5,711.1 69.0,711.5 69.5,712.1 70.0,712.8 70.5,712.6 71.0,712.4 71.5,712.3 72.0,712.1 72.5,712.0 73.0,711.8 73.5,711.7 74.0,711.6 74.5,713.2 75.0,714.7 75.5,716.3 76.0,717.9 76.5,717.8 77.0,717.7 77.5,717.6 78.0,717.5 78.5,717.0 79.0,716.6 79.5,716.3 80.0,716.0 80.5,715.8 81.0,715.6 81.5,715.4 82.0,715.2 82.5,714.4 83.0,713.6 83.5,712.8 84.0,712.0 84.5,711.8 85.0,711.6 85.5,711.4 86.0,711.2 86.5,711.4 87.0,711.5 87.5,711.7 88.0,711.8 88.5,711.3 89.0,710.8 89.5,710.4 90.0,710.0 90.5,711.7 91.0,713.3 91.5,715.0 92.0,716.7 92.5,715.9 93.0,715.2 93.5,714.4 94.0,713.6 94.5,714.7 95.0,715.8 95.5,716.9 96.0,718.0 96.5,717.1 97.0,716.1 97.5,715.1 98.0,714.1 98.5,715.5 99.0,716.9 99.5,718.1 100.0,719.3 100.5,718.9 101.0,718.5 101.5,718.1 102.0,717.7 102.5,715.6 103.0,713.5 103.5,711.4 104.0,709.3 104.5,709.6 105.0,709.8 105.5,710.0 106.0,710.3 106.5,711.6 107.0,713.0 107.5,714.4 108.0,715.7 108.5,714.5 109.0,713.2 109.5,712.4 110.0,711.5 110.5,712.8 111.0,714.1 111.5,715.4 112.0,716.7 112.5,715.5 113.0,714.3 113.5,713.1 114.0,710.6 114.5,707.7 115.0,706.2 115.5,706.1 116.0,707.3 116.5,709.5 117.0,710.6 117.5,711.7 118.0,712.9 118.5,713.1 119.0,713.3 119.5,713.5 120.0,713.8 120.5,712.5 121.0,711.3 121.5,710.0 122.0,708.7 122.5,708.2 123.0,707.7 123.5,707.2 124.0,706.7 124.5,707.5 125.0,708.3 125.5,709.1 126.0,709.9 126.5,711.6 127.0,713.3 127.5,715.0 128.0,716.7 128.5,716.4 129.0,716.2 129.5,715.8 130.0,715.5 130.5,714.1 131.0,712.8 131.5,711.4 132.0,710.1 132.5,710.5 133.0,710.9 133.5,711.3 134.0,711.8 134.5,711.1 135.0,710.5 135.5,709.9 136.0,709.3 136.5,709.0 137.0,708.6 137.5,708.2 138.0,707.9 138.5,702.9 139.0,696.8 139.5,692.1 140.0,688.7 140.5,686.7 141.0,686.0 141.5,686.7 142.0,688.7 142.5,692.1 143.0,696.8 143.5,702.9 144.0,710.3 144.5,712.2 145.0,712.0 145.5,711.7 146.0,711.5 146.5,711.0 147.0,710.4 147.5,709.9 148.0,709.3 148.5,710.6 149.0,711.9 149.5,713.3 150.0,714.7 150.5,713.5 151.0,712.3 151.5,711.1 152.0,709.9 152.5,711.2 153.0,712.6 153.5,714.0 154.0,715.3 154.5,714.0 155.0,712.7 155.5,711.4 156.0,710.1 156.5,710.7 157.0,711.3 157.5,711.9 158.0,712.6 158.5,712.0 159.0,711.4 159.5,711.0 160.0,710.6 160.5,710.7 161.0,710.9 161.5,711.1 162.0,701.1 162.5,692.3 163.0,684.9 163.5,678.8 164.0,674.1 164.5,670.7 165.0,668.7 165.5,668.0 166.0,668.7 166.5,670.7 167.0,674.1 167.5,678.8 168.0,684.9 168.5,692.3 169.0,701.1 169.5,711.2 170.0,717.5 170.5,715.7 171.0,714.0 171.5,712.3 172.0,710.5 172.5,710.8 173.0,711.0 173.5,711.2 174.0,711.5 174.5,712.7 175.0,714.0 175.5,715.3 176.0,716.5 176.5,716.2 177.0,716.0 177.5,715.7 178.0,715.4 178.5,714.3 179.0,713.3 179.5,712.1 180.0,710.9 180.5,713.0 181.0,715.1 181.5,717.2 182.0,719.3 182.5,717.6 183.0,715.9 183.5,714.1 184.0,712.4 184.5,712.1 185.0,711.8 185.5,711.5 186.0,698.7 186.5,687.2 187.0,677.1 187.5,668.3 188.0,660.9 188.5,654.8 189.0,650.1 189.5,646.7 190.0,644.7 190.5,644.0 191.0,644.7 191.5,646.7 192.0,650.1 192.5,654.8 193.0,660.9 193.5,668.3 194.0,677.1 194.5,687.2 195.0,698.7 195.5,711.1 196.0,711.0 196.5,712.0 197.0,713.0 197.5,714.1 198.0,715.1 198.5,714.2 199.0,713.3 199.5,712.2 200.0,711.2 200.5,711.7 201.0,712.2 201.5,712.7 202.0,713.3 202.5,712.4 203.0,711.6 203.5,710.8 204.0,709.9 204.5,710.3 205.0,710.6 205.5,711.0 206.0,711.4 206.5,712.7 207.0,714.0 207.5,715.3 208.0,716.7 208.5,715.7 209.0,714.8 209.5,710.7 210.0,696.5 210.5,683.7 211.0,672.2 211.5,662.1 212.0,653.3 212.5,645.9 213.0,639.8 213.5,635.1 214.0,631.7 214.5,629.7 215.0,629.0 215.5,629.7 216.0,631.7 216.5,635.1 217.0,639.8 217.5,645.9 218.0,653.3 218.5,662.1 219.0,672.2 219.5,683.7 220.0,696.5 220.5,710.7 221.0,717.3 221.5,716.9 222.0,716.4 222.5,714.8 223.0,713.2 223.5,711.6 224.0,710.1 224.5,710.0 225.0,710.0 225.5,710.0 226.0,709.9 226.5,711.3 227.0,712.6 227.5,714.0 228.0,715.4 228.5,715.9 229.0,716.5 229.5,717.1 230.0,717.7 230.5,716.2 231.0,714.6 231.5,713.1 232.0,711.5 232.5,713.4 233.0,710.0 233.5,645.5 234.0,594.2 234.5,554.5 235.0,524.6 235.5,502.9 236.0,487.8 236.5,477.9 237.0,471.9 237.5,468.8 238.0,467.4 238.5,467.0 239.0,467.0 239.5,467.0 240.0,467.4 240.5,468.8 241.0,471.9 241.5,477.9 242.0,487.8 242.5,502.9 243.0,524.6 243.5,554.5 244.0,594.2 244.5,645.5 245.0,710.0 245.5,716.6 246.0,718.5 246.5,716.6 247.0,714.7 247.5,712.8 248.0,710.9 248.5,711.7 249.0,712.6 249.5,713.7 250.0,714.9 250.5,714.0 251.0,713.0 251.5,712.1 252.0,711.2 252.5,712.5 253.0,713.9 253.5,715.3 254.0,716.7 254.5,716.0 255.0,715.2 255.5,714.5 256.0,713.7 256.5,712.8 257.0,711.9 257.5,708.7 258.0,694.5 258.5,681.7 259.0,670.2 259.5,660.1 260.0,651.3 260.5,643.9 261.0,637.8 261.5,633.1 262.0,629.7 262.5,627.7 263.0,627.0 263.5,627.7 264.0,629.7 264.5,633.1 265.0,637.8 265.5,643.9 266.0,651.3 266.5,660.1 267.0,670.2 267.5,681.7 268.0,694.5 268.5,708.7 269.0,716.5 269.5,717.1 270.0,717.7 270.5,717.0 271.0,716.4 271.5,715.8 272.0,715.1 272.5,714.3 273.0,713.4 273.5,712.6 274.0,711.7 274.5,713.2 275.0,714.7 275.5,716.2 276.0,717.7 276.5,716.1 277.0,714.5 277.5,712.9 278.0,711.3 278.5,710.9 279.0,710.5 279.5,709.8 280.0,709.1 280.5,709.5 281.0,709.8 281.5,708.5 282.0,695.7 282.5,684.2 283.0,674.1 283.5,665.3 284.0,657.9 284.5,651.8 285.0,647.1 285.5,643.7 286.0,641.7 286.5,641.0 287.0,641.7 287.5,643.7 288.0,647.1 288.5,651.8 289.0,657.9 289.5,665.3 290.0,674.1 290.5,684.2 291.0,695.7 291.5,708.5 292.0,715.9 292.5,715.0 293.0,714.0 293.5,713.0 294.0,712.0 294.5,712.6 295.0,713.1 295.5,713.6 296.0,714.2 296.5,715.4 297.0,716.6 297.5,717.8 298.0,719.0 298.5,719.2 299.0,719.4 299.5,719.4 300.0,719.4 300.5,718.4 301.0,717.5 301.5,716.5 302.0,715.5 302.5,715.4 303.0,715.2 303.5,715.1 304.0,714.9 304.5,714.8 305.0,714.7 305.5,714.6 306.0,714.5 306.5,705.1 307.0,696.3 307.5,688.9 308.0,682.8 308.5,678.1 309.0,674.7 309.5,672.7 310.0,672.0 310.5,672.7 311.0,674.7 311.5,678.1 312.0,682.8 312.5,688.9 313.0,696.3 313.5,705.1 314.0,715.2 314.5,715.7 315.0,715.5 315.5,715.3 316.0,715.1 316.5,716.0 317.0,716.9 317.5,717.8 318.0,718.7 318.5,716.9 319.0,715.0 319.5,712.8 320.0,710.6 320.5,712.0 321.0,713.4 321.5,714.8 322.0,716.2 322.5,715.8 323.0,715.4 323.5,715.0 324.0,714.6 324.5,715.0 325.0,715.3 325.5,715.6 326.0,715.9 326.5,714.7 327.0,713.5 327.5,712.3 328.0,711.1 328.5,712.4 329.0,713.7 329.5,715.1 330.0,716.6 330.5,709.9 331.0,702.3 331.5,695.9 332.0,690.9 332.5,687.3 333.0,685.0 333.5,684.0 334.0,684.4 334.5,686.2 335.0,689.3 335.5,693.7 336.0,699.6 336.5,706.7 337.0,714.9 337.5,715.5 338.0,716.0 338.5,715.8 339.0,715.6 339.5,715.3 340.0,715.0 340.5,715.0 341.0,714.9 341.5,714.9 342.0,714.9 342.5,715.2 343.0,715.4 343.5,715.7 344.0,716.0 344.5,716.3 345.0,716.7 345.5,717.1 346.0,717.5 346.5,716.3 347.0,715.1 347.5,714.0 348.0,712.8 348.5,713.7 349.0,714.5 349.5,715.2 350.0,715.8 350.5,716.1 351.0,716.5 351.5,716.8 352.0,717.2 352.5,717.0 353.0,716.8 353.5,716.6 354.0,716.4 354.5,715.1 355.0,713.8 355.5,710.1 356.0,706.7 356.5,704.7 357.0,704.0 357.5,704.7 358.0,706.7 358.5,710.1 359.0,713.6 359.5,714.2 360.0,714.7 360.5,714.5 361.0,714.2 361.5,713.9 362.0,713.7 362.5,714.2 363.0,714.7 363.5,715.2 364.0,715.7 364.5,714.8 365.0,713.8 365.5,712.9 366.0,712.0 366.5,712.1 367.0,712.1 367.5,712.2 368.0,712.3 368.5,712.0 369.0,711.7 369.5,712.1 370.0,712.5 370.5,711.7 371.0,710.9 371.5,710.0 372.0,709.2 372.5,710.8 373.0,712.5 373.5,714.1 374.0,715.8 374.5,716.3 375.0,716.8 375.5,717.3 376.0,717.8 376.5,717.2 377.0,716.6 377.5,716.1 378.0,715.5 378.5,714.8 379.0,714.1 379.5,713.9 380.0,713.6 380.5,712.9 381.0,712.2 381.5,711.5 382.0,710.8 382.5,711.7 383.0,712.6 383.5,713.4 384.0,714.3 384.5,714.2 385.0,714.1 385.5,714.0 386.0,713.8 386.5,713.7 387.0,713.6 387.5,713.5 388.0,713.5 388.5,714.6 389.0,715.7 389.5,716.3 390.0,716.9 390.5,714.9 391.0,712.8 391.5,710.7 392.0,708.7 392.5,709.9 393.0,711.1 393.5,712.3 394.0,713.5 394.5,711.8 395.0,710.2 395.5,708.5 396.0,706.9 396.5,708.2 397.0,709.5 397.5,710.8 398.0,712.1 398.5,711.9 399.0,711.6 399.5,711.5 400.0,711.4 400.5,711.0 401.0,710.6 401.5,710.2 402.0,709.9 402.5,711.1 403.0,712.4 403.5,713.6 404.0,714.9 404.5,714.6 405.0,714.2 405.5,713.8 406.0,713.5 406.5,713.9 407.0,714.2 407.5,714.6 408.0,715.0 408.5,715.8 409.0,716.6 409.5,717.4 410.0,718.1 410.5,716.6 411.0,715.2 411.5,713.7 412.0,712.2 412.5,711.7 413.0,711.2 413.5,710.7 414.0,710.2 414.5,710.8 415.0,711.4 415.5,712.0 416.0,712.6 416.5,713.4 417.0,714.2 417.5,715.0 418.0,715.7 418.5,714.6 419.0,713.4 419.5,712.4 420.0,711.5 420.5,711.5 421.0,711.6 421.5,711.6 422.0,711.7 422.5,713.5 423.0,715.3 423.5,717.2 424.0,719.0 424.5,718.2 425.0,717.4 425.5,716.6 426.0,715.8 426.5,715.1 427.0,714.3 427.5,713.6 428.0,712.9 428.5,713.7 429.0,714.5 429.5,715.8 430.0,717.0 430.5,716.0 431.0,714.9 431.5,713.8 432.0,712.8 432.5,713.8 433.0,714.8 433.5,715.8 434.0,716.8 434.5,715.3 435.0,713.8 435.5,712.3 436.0,710.8 436.5,710.8 437.0,710.9 437.5,711.0 438.0,711.1 438.5,711.6 439.0,712.0 439.5,712.9 440.0,713.9 440.5,714.2 441.0,714.5 441.5,714.8 442.0,715.1 442.5,715.1 443.0,715.1 443.5,715.1 444.0,715.1 444.5,714.1 445.0,713.1 445.5,712.1 446.0,711.1 446.5,711.8 447.0,712.4 447.5,713.0 448.0,713.6 448.5,713.1 449.0,712.7 449.5,711.9 450.0,711.2 450.5,710.7 451.0,710.1 451.5,709.6 452.0,709.1 452.5,709.8 453.0,710.5 453.5,711.2 454.0,711.9 454.5,712.9 455.0,713.9 455.5,714.9 456.0,715.9 456.5,716.2 457.0,716.4 457.5,716.7 458.0,716.9 458.5,716.8 459.0,716.7 459.5,716.4 460.0,716.0 460.5,716.5 461.0,717.0 461.5,717.5 462.0,718.0 462.5,716.4 463.0,714.8 463.5,713.2 464.0,711.6 464.5,711.3 465.0,711.0 465.5,710.7 466.0,710.4 466.5,711.0 467.0,711.6 467.5,712.2 468.0,712.8 468.5,712.3 469.0,711.9 469.5,711.6 470.0,711.4 470.5,711.4 471.0,711.4 471.5,711.4 472.0,711.5 472.5,712.1 473.0,712.7 473.5,713.3 474.0,713.9 474.5,714.3 475.0,714.6 475.5,715.0 476.0,715.3 476.5,714.9 477.0,714.4 477.5,714.0 478.0,713.5 478.5,713.0 479.0,712.4 479.5,711.9 480.0,711.4 480.5,712.4 481.0,713.5 481.5,714.6 482.0,715.7 482.5,715.9 483.0,716.1 483.5,716.3 484.0,716.5 484.5,715.3 485.0,714.1 485.5,712.9 486.0,711.8 486.5,710.9 487.0,710.1" fill="none" stroke="#fff" stroke-width="1" stroke-linejoin="round"/><polyline points="4.0,721.5 4.5,721.5 5.0,721.4 5.5,721.3 6.0,721.2 6.5,721.0 7.0,720.7 7.5,720.4 8.0,720.2 8.5,718.0 9.0,715.9 9.5,713.8 10.0,711.6 10.5,712.8 11.0,714.0 11.5,715.2 12.0,716.3 12.5,715.8 13.0,715.3 13.5,714.8 14.0,714.3 14.5,714.4 15.0,714.6 15.5,714.8 16.0,715.0 16.5,713.9 17.0,712.8 17.5,711.7 18.0,710.6 18.5,710.7 19.0,710.7 19.5,710.9 20.0,711.1 20.5,711.8 21.0,712.4 21.5,713.1 22.0,713.8 22.5,713.3 23.0,712.7 23.5,712.2 24.0,711.7 24.5,712.5 25.0,713.3 25.5,714.0 26.0,714.8 26.5,713.9 27.0,713.1 27.5,712.2 28.0,711.3 28.5,711.6 29.0,712.0 29.5,712.0 30.0,712.0 30.5,713.5 31.0,714.9 31.5,716.4 32.0,717.8 32.5,716.9 33.0,716.1 33.5,715.3 34.0,714.4 34.5,714.5 35.0,714.6 35.5,714.6 36.0,714.7 36.5,715.1 37.0,715.5 37.5,715.9 38.0,716.3 38.5,715.3 39.0,714.2 39.5,713.6 40.0,713.0 40.5,712.6 41.0,712.2 41.5,711.8 42.0,711.4 42.5,713.6 43.0,715.8 43.5,717.9 44.0,720.1 44.5,719.5 45.0,718.9 45.5,718.2 46.0,717.6 46.5,717.7 47.0,717.7 47.5,717.7 48.0,717.8 48.5,717.5 49.0,717.3 49.5,717.4 50.0,717.6 50.5,718.6 51.0,719.7 51.5,720.8 52.0,721.9 52.5,720.6 53.0,719.3 53.5,718.0 54.0,716.7 54.5,717.5 55.0,718.2 55.5,719.0 56.0,719.7 56.5,718.5 57.0,717.3 57.5,716.1 58.0,714.9 58.5,715.1 59.0,715.4 59.5,716.0 60.0,716.5 60.5,716.8 61.0,717.1 61.5,717.3 62.0,714.8 62.5,710.1 63.0,706.7 63.5,704.7 64.0,704.0 64.5,704.7 65.0,706.7 65.5,710.1 66.0,711.6 66.5,712.5 67.0,713.3 67.5,714.2 68.0,715.1 68.5,715.6 69.0,716.1 69.5,716.8 70.0,717.5 70.5,717.3 71.0,717.0 71.5,716.8 72.0,716.6 72.5,716.3 73.0,716.1 73.5,715.8 74.0,715.6 74.5,716.2 75.0,716.9 75.5,717.5 76.0,718.2 76.5,717.2 77.0,716.2 77.5,715.3 78.0,714.3 78.5,714.4 79.0,714.6 79.5,714.6 80.0,714.7 80.5,715.1 81.0,715.5 81.5,715.8 82.0,716.2 82.5,717.5 83.0,718.8 83.5,720.0 84.0,721.3 84.5,719.6 85.0,717.9 85.5,716.1 86.0,714.4 86.5,714.0 87.0,713.6 87.5,713.3 88.0,712.9 88.5,711.1 89.0,707.7 89.5,705.7 90.0,705.0 90.5,705.7 91.0,707.7 91.5,711.1 92.0,711.0 92.5,711.5 93.0,711.9 93.5,712.4 94.0,712.9 94.5,713.4 95.0,714.0 95.5,714.5 96.0,715.0 96.5,715.5 97.0,715.9 97.5,716.3 98.0,716.7 98.5,715.3 99.0,713.9 99.5,713.1 100.0,712.3 100.5,712.8 101.0,713.3 101.5,713.8 102.0,714.4 102.5,714.6 103.0,714.8 103.5,715.0 104.0,715.3 104.5,715.0 105.0,714.8 105.5,714.6 106.0,714.4 106.5,715.4 107.0,716.3 107.5,717.2 108.0,718.2 108.5,717.4 109.0,716.5 109.5,716.0 110.0,715.4 110.5,714.7 111.0,713.9 111.5,713.2 112.0,712.5 112.5,712.1 113.0,710.8 113.5,705.2 114.0,701.1 114.5,698.2 115.0,696.7 115.5,696.6 116.0,697.8 116.5,700.4 117.0,704.3 117.5,709.6 118.0,715.5 118.5,715.6 119.0,715.7 119.5,716.0 120.0,716.3 120.5,714.8 121.0,713.3 121.5,711.9 122.0,710.4 122.5,711.1 123.0,711.9 123.5,712.6 124.0,713.4 124.5,714.5 125.0,715.7 125.5,716.8 126.0,717.9 126.5,717.3 127.0,716.7 127.5,716.1 128.0,715.4 128.5,716.5 129.0,717.6 129.5,718.8 130.0,720.0 130.5,718.4 131.0,716.7 131.5,715.1 132.0,713.5 132.5,715.8 133.0,718.2 133.5,720.5 134.0,722.9 134.5,720.4 135.0,718.0 135.5,715.6 136.0,713.2 136.5,713.9 137.0,714.7 137.5,715.5 138.0,707.9 138.5,700.5 139.0,694.4 139.5,689.7 140.0,686.3 140.5,684.3 141.0,683.6 141.5,684.3 142.0,686.3 142.5,689.7 143.0,694.4 143.5,700.5 144.0,707.9 144.5,716.7 145.0,719.9 145.5,720.6 146.0,721.3 146.5,720.9 147.0,720.4 147.5,720.0 148.0,719.5 148.5,719.9 149.0,720.2 149.5,720.3 150.0,720.5 150.5,719.2 151.0,718.0 151.5,716.8 152.0,715.5 152.5,716.4 153.0,717.3 153.5,718.2 154.0,719.1 154.5,718.5 155.0,717.8 155.5,717.2 156.0,716.5 156.5,715.4 157.0,714.4 157.5,713.3 158.0,712.3 158.5,713.8 159.0,715.3 159.5,717.1 160.0,718.9 160.5,717.6 161.0,716.4 161.5,712.7 162.0,702.6 162.5,693.8 163.0,686.4 163.5,680.3 164.0,675.6 164.5,672.2 165.0,670.2 165.5,669.5 166.0,670.2 166.5,672.2 167.0,675.6 167.5,680.3 168.0,686.4 168.5,693.8 169.0,702.6 169.5,711.0 170.0,710.6 170.5,712.8 171.0,714.9 171.5,717.0 172.0,719.2 172.5,719.5 173.0,719.8 173.5,720.2 174.0,720.5 174.5,718.6 175.0,716.7 175.5,714.9 176.0,713.0 176.5,712.7 177.0,712.3 177.5,712.0 178.0,711.7 178.5,712.7 179.0,713.7 179.5,714.8 180.0,715.9 180.5,715.0 181.0,714.1 181.5,713.3 182.0,712.4 182.5,713.3 183.0,714.3 183.5,715.2 184.0,716.2 184.5,716.6 185.0,717.1 185.5,708.5 186.0,695.7 186.5,684.2 187.0,674.1 187.5,665.3 188.0,657.9 188.5,651.8 189.0,647.1 189.5,643.7 190.0,641.7 190.5,641.0 191.0,641.7 191.5,643.7 192.0,647.1 192.5,651.8 193.0,657.9 193.5,665.3 194.0,674.1 194.5,684.2 195.0,695.7 195.5,708.5 196.0,712.4 196.5,714.0 197.0,715.6 197.5,717.2 198.0,718.8 198.5,718.9 199.0,718.9 199.5,718.5 200.0,718.1 200.5,718.2 201.0,718.2 201.5,718.2 202.0,718.2 202.5,717.5 203.0,716.8 203.5,716.1 204.0,715.4 204.5,715.0 205.0,714.6 205.5,714.2 206.0,713.8 206.5,714.7 207.0,715.7 207.5,716.7 208.0,717.7 208.5,718.3 209.0,718.9 209.5,708.7 210.0,694.5 210.5,681.7 211.0,670.2 211.5,660.1 212.0,651.3 212.5,643.9 213.0,637.8 213.5,633.1 214.0,629.7 214.5,627.7 215.0,627.0 215.5,627.7 216.0,629.7 216.5,633.1 217.0,637.8 217.5,643.9 218.0,651.3 218.5,660.1 219.0,670.2 219.5,681.7 220.0,694.5 220.5,708.7 221.0,718.1 221.5,717.6 222.0,717.2 222.5,717.2 223.0,717.3 223.5,717.3 224.0,717.4 224.5,718.0 225.0,718.6 225.5,719.2 226.0,719.8 226.5,718.0 227.0,716.1 227.5,714.2 228.0,712.3 228.5,713.6 229.0,714.8 229.5,716.0 230.0,717.3 230.5,716.5 231.0,715.7 231.5,715.0 232.0,714.2 232.5,714.7 233.0,708.0 233.5,643.5 234.0,592.2 234.5,552.5 235.0,522.6 235.5,500.9 236.0,485.8 236.5,475.9 237.0,469.9 237.5,466.8 238.0,465.4 238.5,465.0 239.0,465.0 239.5,465.0 240.0,465.4 240.5,466.8 241.0,469.9 241.5,475.9 242.0,485.8 242.5,500.9 243.0,522.6 243.5,552.5 244.0,592.2 244.5,643.5 245.0,708.0 245.5,716.2 246.0,716.5 246.5,716.0 247.0,715.6 247.5,715.2 248.0,714.8 248.5,715.9 249.0,717.1 249.5,717.5 250.0,718.0 250.5,717.3 251.0,716.7 251.5,716.1 252.0,715.5 252.5,715.1 253.0,714.6 253.5,714.2 254.0,713.7 254.5,714.4 255.0,715.1 255.5,715.8 256.0,716.4 256.5,714.7 257.0,712.9 257.5,709.5 258.0,695.3 258.5,682.5 259.0,671.0 259.5,660.9 260.0,652.1 260.5,644.7 261.0,638.6 261.5,633.9 262.0,630.5 262.5,628.5 263.0,627.8 263.5,628.5 264.0,630.5 264.5,633.9 265.0,638.6 265.5,644.7 266.0,652.1 266.5,660.9 267.0,671.0 267.5,682.5 268.0,695.3 268.5,709.5 269.0,715.2 269.5,716.5 270.0,717.8 270.5,716.7 271.0,715.6 271.5,714.4 272.0,713.3 272.5,714.1 273.0,714.9 273.5,715.8 274.0,716.6 274.5,716.3 275.0,715.9 275.5,715.6 276.0,715.2 276.5,714.1 277.0,713.0 277.5,711.9 278.0,710.7 278.5,712.0 279.0,713.3 279.5,715.2 280.0,717.1 280.5,716.9 281.0,716.7 281.5,707.2 282.0,694.4 282.5,682.9 283.0,672.8 283.5,664.0 284.0,656.6 284.5,650.5 285.0,645.8 285.5,642.4 286.0,640.4 286.5,639.7 287.0,640.4 287.5,642.4 288.0,645.8 288.5,650.5 289.0,656.6 289.5,664.0 290.0,672.8 290.5,682.9 291.0,694.4 291.5,707.2 292.0,713.4 292.5,715.3 293.0,717.2 293.5,719.2 294.0,721.1 294.5,718.9 295.0,716.8 295.5,714.6 296.0,712.5 296.5,714.3 297.0,716.2 297.5,718.0 298.0,719.9 298.5,719.7 299.0,719.6 299.5,719.7 300.0,719.9 300.5,719.2 301.0,718.4 301.5,717.7 302.0,717.0 302.5,717.8 303.0,718.7 303.5,719.6 304.0,720.5 304.5,719.8 305.0,719.1 305.5,718.5 306.0,712.2 306.5,702.1 307.0,693.3 307.5,685.9 308.0,679.8 308.5,675.1 309.0,671.7 309.5,669.7 310.0,669.0 310.5,669.7 311.0,671.7 311.5,675.1 312.0,679.8 312.5,685.9 313.0,693.3 313.5,702.1 314.0,712.2 314.5,715.1 315.0,715.1 315.5,715.1 316.0,715.1 316.5,716.9 317.0,718.7 317.5,720.5 318.0,722.3 318.5,720.9 319.0,719.5 319.5,717.8 320.0,716.1 320.5,716.0 321.0,716.0 321.5,715.9 322.0,715.9 322.5,715.8 323.0,715.8 323.5,715.7 324.0,715.6 324.5,716.3 325.0,717.0 325.5,717.7 326.0,718.4 326.5,717.2 327.0,716.1 327.5,714.9 328.0,713.8 328.5,713.6 329.0,713.5 329.5,714.2 330.0,714.8 330.5,706.7 331.0,699.1 331.5,692.7 332.0,687.7 332.5,684.1 333.0,681.8 333.5,680.8 334.0,681.2 334.5,683.0 335.0,686.1 335.5,690.5 336.0,696.4 336.5,703.5 337.0,712.0 337.5,714.9 338.0,715.2 338.5,715.3 339.0,715.5 339.5,715.1 340.0,714.8 340.5,715.8 341.0,716.8 341.5,717.8 342.0,718.8 342.5,717.4 343.0,716.1 343.5,714.7 344.0,713.4 344.5,712.8 345.0,712.2 345.5,711.6 346.0,711.0 346.5,712.3 347.0,713.6 347.5,714.9 348.0,716.1 348.5,715.7 349.0,715.2 349.5,714.0 350.0,712.7 350.5,713.4 351.0,714.1 351.5,714.8 352.0,715.5 352.5,714.8 353.0,714.0 353.5,713.3 354.0,712.6 354.5,711.9 355.0,705.8 355.5,701.1 356.0,697.7 356.5,695.7 357.0,695.0 357.5,695.7 358.0,697.7 358.5,701.1 359.0,705.8 359.5,711.9 360.0,717.5 360.5,716.4 361.0,715.3 361.5,714.1 362.0,713.0 362.5,715.3 363.0,717.5 363.5,719.7 364.0,722.0 364.5,721.0 365.0,720.1 365.5,719.2 366.0,718.3 366.5,716.8 367.0,715.3 367.5,713.7 368.0,712.2 368.5,714.1 369.0,716.0 369.5,718.0 370.0,720.0 370.5,718.8 371.0,717.6 371.5,716.4 372.0,715.2 372.5,715.6 373.0,715.9 373.5,716.3 374.0,716.6 374.5,715.9 375.0,715.2 375.5,714.5 376.0,713.8 376.5,715.3 377.0,716.9 377.5,718.4 378.0,715.9 378.5,709.8 379.0,705.1 379.5,701.7 380.0,699.7 380.5,699.0 381.0,699.7 381.5,701.7 382.0,705.1 382.5,709.8 383.0,715.9 383.5,715.4 384.0,714.5 384.5,715.1 385.0,715.7 385.5,716.3 386.0,716.8 386.5,715.7 387.0,714.6 387.5,713.5 388.0,712.4 388.5,711.8 389.0,711.1 389.5,710.7 390.0,710.4 390.5,712.6 391.0,714.9 391.5,717.1 392.0,719.4 392.5,718.9 393.0,718.4 393.5,717.9 394.0,717.4 394.5,716.5 395.0,715.5 395.5,714.5 396.0,713.5 396.5,715.8 397.0,718.0 397.5,720.3 398.0,722.5 398.5,722.6 399.0,722.6 399.5,722.3 400.0,721.9 400.5,718.4 401.0,712.3 401.5,707.6 402.0,704.2 402.5,702.2 403.0,701.5 403.5,702.2 404.0,704.2 404.5,707.6 405.0,712.3 405.5,716.3 406.0,717.9 406.5,716.9 407.0,715.8 407.5,714.8 408.0,713.7 408.5,715.3 409.0,716.9 409.5,718.0 410.0,719.1 410.5,718.1 411.0,717.1 411.5,716.0 412.0,715.0 412.5,715.2 413.0,715.5 413.5,715.7 414.0,715.9 414.5,715.9 415.0,715.8 415.5,715.8 416.0,715.7 416.5,716.5 417.0,717.3 417.5,718.1 418.0,718.9 418.5,719.3 419.0,719.8 419.5,719.9 420.0,720.0 420.5,719.5 421.0,718.9 421.5,718.4 422.0,717.8 422.5,717.8 423.0,717.7 423.5,717.7 424.0,717.7 424.5,716.7 425.0,715.6 425.5,714.6 426.0,713.6 426.5,712.7 427.0,711.9 427.5,711.1 428.0,710.2 428.5,709.7 429.0,709.3 429.5,709.6 430.0,709.9 430.5,712.2 431.0,714.5 431.5,716.9 432.0,719.2 432.5,718.0 433.0,716.8 433.5,715.5 434.0,714.3 434.5,714.5 435.0,714.7 435.5,714.9 436.0,715.1 436.5,714.5 437.0,713.9 437.5,713.2 438.0,712.6 438.5,713.0 439.0,713.4 439.5,714.2 440.0,715.0 440.5,714.8 441.0,714.6 441.5,714.4 442.0,714.2 442.5,715.0 443.0,715.9 443.5,716.7 444.0,717.5 444.5,716.4 445.0,715.2 445.5,714.1 446.0,713.0 446.5,712.7 447.0,712.4 447.5,712.1 448.0,711.9 448.5,712.5 449.0,713.2 449.5,714.2 450.0,715.3 450.5,715.8 451.0,716.4 451.5,717.0 452.0,717.5 452.5,718.3 453.0,719.1 453.5,719.9 454.0,720.6 454.5,718.8 455.0,717.0 455.5,715.2 456.0,713.4 456.5,714.5 457.0,715.7 457.5,716.8 458.0,718.0 458.5,717.9 459.0,717.9 459.5,718.6 460.0,719.3 460.5,719.7 461.0,720.2 461.5,720.6 462.0,721.1 462.5,719.4 463.0,717.8 463.5,716.1 464.0,714.4 464.5,714.5 465.0,714.6 465.5,714.7 466.0,714.8 466.5,715.2 467.0,715.7 467.5,716.1 468.0,716.6 468.5,716.2 469.0,715.8 469.5,716.4 470.0,717.0 470.5,715.4 471.0,713.9 471.5,712.4 472.0,710.8 472.5,712.2 473.0,713.5 473.5,714.8 474.0,716.2 474.5,716.9 475.0,717.7 475.5,718.5 476.0,719.3 476.5,719.4 477.0,719.4 477.5,719.5 478.0,719.6 478.5,719.0 479.0,718.4 479.5,717.7 480.0,717.1 480.5,716.2 481.0,715.2 481.5,714.3 482.0,713.4 482.5,713.8 483.0,714.2 483.5,714.6 484.0,714.9 484.5,714.1 485.0,713.2 485.5,712.3 486.0,711.5 486.5,712.1 487.0,712.8" fill="none" stroke="#00ff00" stroke-width="1" stroke-linejoin="round"/></g></svg><svg style="left:14px;top:440px" width="23" height="23" viewBox="0 0 23 23" ><rect x="0.6" y="0.6" width="21.8" height="21.8" rx="3" ry="3" fill="#000" stroke="#fff" stroke-width="1.2"/><line x1="6.5" y1="3" x2="6.5" y2="19" stroke="#787878" stroke-width="1" shape-rendering="crispEdges"/><line x1="13.5" y1="3" x2="13.5" y2="19" stroke="#787878" stroke-width="1" shape-rendering="crispEdges"/><line x1="16.5" y1="3" x2="16.5" y2="19" stroke="#787878" stroke-width="1" shape-rendering="crispEdges"/><line x1="19.5" y1="3" x2="19.5" y2="19" stroke="#787878" stroke-width="1" shape-rendering="crispEdges"/><line x1="3" y1="5.5" x2="21" y2="5.5" stroke="#787878" stroke-width="1" shape-rendering="crispEdges"/><line x1="3" y1="10.5" x2="21" y2="10.5" stroke="#787878" stroke-width="1" shape-rendering="crispEdges"/><line x1="3" y1="15.5" x2="21" y2="15.5" stroke="#787878" stroke-width="1" shape-rendering="crispEdges"/><polyline points="3,19.4 4,18.4 5,19.4 6.5,18.6 8,19.4 9.2,18.2 11.8,18.2 13,19.2 14.5,18.6 15.5,19.3 17.6,18.6 18.6,19.3 20,19 21,19.5" fill="none" stroke="#00ee00" stroke-width="0.9"/><line x1="3" y1="19.9" x2="21" y2="19.9" stroke="#00ee00" stroke-width="0.9"/><g shape-rendering="crispEdges" stroke="#00ff00" stroke-width="1"><line x1="10.5" y1="3" x2="10.5" y2="19"/><line x1="16.5" y1="12" x2="16.5" y2="19"/><line x1="19.5" y1="15" x2="19.5" y2="19"/></g></svg><div class="t" style="left:54.5px;top:436.5px;color:#fff">Left channel</div><div class="t" style="left:54.5px;top:452.5px;color:#00ff00">Right channel</div><div class="t" style="left:490px;top:430px;">dB</div><div class="t" style="left:489px;top:443.5px;">-10</div><div class="t" style="left:489px;top:463.96px;">-20</div><div class="t" style="left:489px;top:484.42px;">-30</div><div class="t" style="left:489px;top:504.88px;">-40</div><div class="t" style="left:489px;top:525.34px;">-50</div><div class="t" style="left:489px;top:545.8px;">-60</div><div class="t" style="left:489px;top:566.26px;">-70</div><div class="t" style="left:489px;top:586.72px;">-80</div><div class="t" style="left:489px;top:607.18px;">-90</div><div class="t" style="left:489px;top:627.64px;">-100</div><div class="t" style="left:489px;top:648.1px;">-110</div><div class="t" style="left:489px;top:668.56px;">-120</div><div class="t" style="left:489px;top:689.02px;">-130</div><div class="t" style="left:489px;top:709.48px;">-140</div><div class="t" style="left:43.75607839209036px;top:738px;width:60px;text-align:center">6600</div><div class="t" style="left:127.84692028017895px;top:738px;width:60px;text-align:center">6800</div><div class="t" style="left:209.5px;top:738px;width:60px;text-align:center">7000</div><div class="t" style="left:288.8526843207371px;top:738px;width:60px;text-align:center">7200</div><div class="t" style="left:366.03104664264185px;top:738px;width:60px;text-align:center">7400</div><div class="t" style="left:488px;top:738px;">Hz</div><div class="dith" style="left:514px;top:428px;width:18px;height:308px;"></div><div class="btn" style="left:514px;top:428px;width:18px;height:16px;"></div><svg style="left:514px;top:428px" width="18" height="16" viewBox="0 0 18 16" ><polygon points="5.0,9.5 12.0,9.5 8.5,5.5" fill="#000"/></svg><div class="btn" style="left:514px;top:469px;width:18px;height:186px;"></div><div class="btn" style="left:514px;top:720.5px;width:18px;height:15.5px;"></div><svg style="left:514px;top:720.5px" width="18" height="15.5" viewBox="0 0 18 15.5" ><polygon points="5.0,5.75 12.0,5.75 8.5,9.75" fill="#000"/></svg><div class="btn" style="left:514px;top:736px;width:18px;height:18px;"></div><svg style="left:514px;top:736px" width="18" height="18" viewBox="0 0 18 18" ><circle cx="7.8" cy="7.6" r="4.7" fill="#d4d0c8" stroke="#000" stroke-width="2.1"/><line x1="11.4" y1="11.2" x2="14.399999999999999" y2="14.399999999999999" stroke="#000" stroke-width="2.6"/><line x1="5.199999999999999" y1="7.6" x2="10.4" y2="7.6" stroke="#000" stroke-width="2"/><line x1="7.8" y1="5.0" x2="7.8" y2="10.2" stroke="#000" stroke-width="2"/></svg><div class="dith" style="left:2px;top:754px;width:459px;height:18px;"></div><div class="btn" style="left:2px;top:754px;width:16px;height:18px;"></div><svg style="left:2px;top:754px" width="16" height="18" viewBox="0 0 16 18" ><polygon points="9.0,5.0 9.0,12.0 5.0,8.5" fill="#000"/></svg><div class="btn" style="left:370px;top:754px;width:7px;height:18px;"></div><div class="btn" style="left:461px;top:754px;width:16px;height:18px;"></div><svg style="left:461px;top:754px" width="16" height="18" viewBox="0 0 16 18" ><polygon points="6.0,5.0 6.0,12.0 10.0,8.5" fill="#000"/></svg><div class="btn" style="left:477px;top:754px;width:18px;height:18px;"></div><svg style="left:477px;top:754px" width="18" height="18" viewBox="0 0 18 18" ><circle cx="7.8" cy="7.6" r="4.7" fill="#d4d0c8" stroke="#000" stroke-width="2.1"/><line x1="11.4" y1="11.2" x2="14.399999999999999" y2="14.399999999999999" stroke="#000" stroke-width="2.6"/><line x1="5.199999999999999" y1="7.6" x2="10.4" y2="7.6" stroke="#000" stroke-width="2"/><line x1="7.8" y1="5.0" x2="7.8" y2="10.2" stroke="#000" stroke-width="2"/></svg><div class="btn" style="left:495px;top:754px;width:18px;height:18px;"></div><svg style="left:495px;top:754px" width="18" height="18" viewBox="0 0 18 18" ><circle cx="7.8" cy="7.6" r="4.7" fill="#d4d0c8" stroke="#000" stroke-width="2.1"/><line x1="11.4" y1="11.2" x2="14.399999999999999" y2="14.399999999999999" stroke="#000" stroke-width="2.6"/><line x1="5.199999999999999" y1="7.6" x2="10.4" y2="7.6" stroke="#000" stroke-width="2"/></svg><div class="btn" style="left:514px;top:754px;width:18px;height:18px;"></div><svg style="left:514px;top:754px" width="18" height="18" viewBox="0 0 18 18" ><circle cx="7.8" cy="7.6" r="4.7" fill="#d4d0c8" stroke="#000" stroke-width="2.1"/><line x1="11.4" y1="11.2" x2="14.399999999999999" y2="14.399999999999999" stroke="#000" stroke-width="2.6"/><line x1="5.199999999999999" y1="7.6" x2="10.4" y2="7.6" stroke="#000" stroke-width="2"/></svg><div style="left:3px;top:772px;width:529px;height:1px;background:rgba(120,125,105,0.35)"></div><div class="sunk1" style="left:2px;top:778px;width:274px;height:22px;background:#d4d0c8"></div><div style="left:2px;top:778px;width:274px;height:22px;box-shadow:inset 1px 1px 0 #808080, inset 2px 2px 0 #404040, inset -1px -1px 0 #fff"></div><div style="left:5px;top:780.5px;width:259.5px;height:13px;background:#0a246a"></div><div class="t" style="left:6px;top:780.5px;color:#fff">Cursor:  6956 Hz,  left = -136.40 dB,  right = -137.85 dB</div><div class="btn" style="left:287px;top:776px;width:27px;height:26px;"></div><div style="left:286px;top:776.5px;width:27px;height:26px;text-align:center;font-family:'Liberation Serif',serif;font-weight:bold;font-size:25px;line-height:26px;color:#000">A</div><div class="btn" style="left:315px;top:776px;width:27px;height:26px;"></div><div style="left:318px;top:778px;width:21px;height:22px;background:#c8c8c8"></div><svg style="left:315px;top:776px" width="27" height="26" viewBox="0 0 27 26" ><g fill="#0000e6"><polygon points="10,5.3 12,2.2 17.3,2.2 20,5 22,3.1 22,9.8 15.1,9.8 17,7.8 14.8,5.3"/><polygon points="3.9,5.3 10,5.3 10,9.5 7.4,9.5 7.4,12 10.5,15.3 8.6,17.8 3.9,14.5"/><polygon points="10,17.6 14.8,13.4 14.8,15.3 19,15.3 22,11.2 22,17.3 19.5,20.3 16.2,20.3 16.2,22.9 14.8,22.9"/></g></svg><div class="btn" style="left:343px;top:776px;width:27px;height:26px;"></div><svg style="left:343px;top:776px" width="27" height="26" viewBox="0 0 27 26" ><defs><linearGradient id="wg" x1="0" y1="0" x2="1" y2="1"><stop offset="0" stop-color="#ffffff"/><stop offset="0.45" stop-color="#c8c8c8"/><stop offset="1" stop-color="#707070"/></linearGradient></defs><path d="M2,20.2 L10,12.8 L9.8,5.9 L12.3,2.8 L20.1,2.2 L21.5,3.6 L20.9,5.3 L18.4,3.9 L14.5,4.5 L13.1,7.3 L13.9,11.2 L16.2,12.5 L19.5,12 L20.9,9.8 L20.9,7.3 L22.6,5.9 L23.7,7.3 L23.4,12.8 L20.4,15.9 L13.9,16.7 L5.8,23.7 Z" fill="url(#wg)" stroke="#484848" stroke-width="1" stroke-linejoin="round"/><path d="M2.6,19.8 L10.8,12.4 L10.6,6.2 L12.8,3.6 L19.6,3.1" fill="none" stroke="#fff" stroke-width="1.1"/><path d="M6.2,22.6 L14.2,15.8 L20,15 L22.6,12.4 L22.8,7.8" fill="none" stroke="#303030" stroke-width="1.1"/><path d="M13.6,7.4 L14.8,5 L18,4.6" fill="none" stroke="#303030" stroke-width="1"/></svg><div class="btn" style="left:371px;top:776px;width:27px;height:26px;"></div><svg style="left:374px;top:779px" width="21" height="20" viewBox="0 0 21 20"><rect x="0.5" y="0.5" width="20" height="19" fill="#808000" stroke="#000" stroke-width="1"/><rect x="4" y="1" width="12" height="8" fill="#d4d0c8"/><rect x="3" y="11" width="14" height="8.5" fill="#000"/><rect x="13" y="12.5" width="3" height="6" fill="#d4d0c8"/><rect x="17.5" y="2" width="1.5" height="1.5" fill="#d4d0c8"/></svg><div style="left:406px;top:781px;width:30px;height:15px;background:#d3dbc2"></div><div class="t" style="left:408px;top:782px;">Scale</div><div class="sunk" style="left:440px;top:778px;width:71px;height:20.5px;background:#fff"></div><div class="t" style="left:445px;top:782px;">Log</div><div class="btn" style="left:493px;top:780px;width:16px;height:16.5px;"></div><svg style="left:493px;top:780px" width="16" height="16.5" viewBox="0 0 16 16.5" ><polygon points="4.0,6.25 11.0,6.25 7.5,10.25" fill="#000"/></svg><svg style="left:523px;top:792.5px" width="12" height="12" viewBox="0 0 12 12" ><rect x="9" y="1" width="2" height="2" fill="#fff"/><rect x="8" y="0" width="2" height="2" fill="#707040"/><rect x="5" y="5" width="2" height="2" fill="#fff"/><rect x="4" y="4" width="2" height="2" fill="#707040"/><rect x="9" y="5" width="2" height="2" fill="#fff"/><rect x="8" y="4" width="2" height="2" fill="#707040"/><rect x="1" y="9" width="2" height="2" fill="#fff"/><rect x="0" y="8" width="2" height="2" fill="#707040"/><rect x="5" y="9" width="2" height="2" fill="#fff"/><rect x="4" y="8" width="2" height="2" fill="#707040"/><rect x="9" y="9" width="2" height="2" fill="#fff"/><rect x="8" y="8" width="2" height="2" fill="#707040"/></svg>
<div style="left:539px;top:404px;width:543px;height:405px;background:linear-gradient(90deg,#c3ceab 0%,#d0d8bc 45%,#dde3d1 100%)"></div><div style="left:539px;top:404px;width:543px;height:1px;background:#fff"></div><div style="left:539px;top:405px;width:542px;height:2px;background:#d4d0c8"></div><div style="left:539px;top:404px;width:1px;height:405px;background:#fff"></div><div style="left:540px;top:405px;width:2px;height:403px;background:#d4d0c8"></div><div style="left:1081px;top:404px;width:1px;height:405px;background:#404040"></div><div style="left:1080px;top:405px;width:1px;height:404px;background:#fff"></div><div style="left:1078px;top:405px;width:2px;height:403px;background:#d4d0c8"></div><div style="left:539px;top:808px;width:543px;height:1px;background:#404040"></div><div style="left:540px;top:807px;width:541px;height:1px;background:#808080"></div><div style="left:541px;top:805px;width:538px;height:2px;background:#d4d0c8"></div><div style="left:542px;top:407px;width:536px;height:18px;background:linear-gradient(90deg,#808080 0%,#858585 30%,#c0c0c0 100%)"></div><div style="left:542px;top:425px;width:536px;height:1px;background:#d4d0c8"></div><svg style="left:544px;top:408px" width="16" height="16" viewBox="0 0 16 16" ><rect width="16" height="16" fill="#7d9263"/><rect y="8" width="16" height="2" fill="#4b5f35"/><rect y="10" width="16" height="1" fill="#2f4020"/><rect y="11" width="16" height="5" fill="#889c6c"/><polyline points="0,9 3,9 5.5,3 8,14 10.5,1.5 12,8.5 16,8.5" fill="none" stroke="#fff" stroke-width="1.4" stroke-linejoin="miter"/></svg><div class="tb" style="left:561.5px;top:409px;letter-spacing:0.1px">IMD (swept frequency)</div><div class="btn" style="left:1026px;top:409px;width:16px;height:14px;"></div><svg style="left:1026px;top:409px" width="16" height="14" viewBox="0 0 16 14" ><rect x="4" y="9" width="6" height="2" fill="#000"/></svg><div class="btn" style="left:1042px;top:409px;width:16px;height:14px;"></div><svg style="left:1042px;top:409px" width="16" height="14" viewBox="0 0 16 14" ><rect x="3.5" y="2.5" width="8" height="8" fill="none" stroke="#000" stroke-width="1"/><rect x="3" y="2" width="9" height="2" fill="#000"/></svg><div class="btn" style="left:1060px;top:409px;width:16px;height:14px;"></div><svg style="left:1060px;top:409px" width="16" height="14" viewBox="0 0 16 14" ><path d="M4,3 L11,10 M11,3 L4,10" stroke="#000" stroke-width="1.6"/></svg><div style="left:546px;top:430px;width:511px;height:326px;background:#c0bdb5;border-top:1px solid #606060;border-left:1px solid #606060"></div><div style="left:547px;top:431px;width:483px;height:307px;background:#000"></div><div style="left:1030px;top:431px;width:1px;height:308px;background:#fff"></div><div style="left:547px;top:738px;width:483px;height:1px;background:#fff"></div><svg style="left:547px;top:431px" width="483" height="307" viewBox="0 0 483 307" ><g transform="translate(-547,-431)"><g shape-rendering="crispEdges" stroke="#7a7a7a" stroke-width="1"><line x1="578.5" y1="431" x2="578.5" y2="738"/><line x1="625.5" y1="431" x2="625.5" y2="738"/><line x1="662.5" y1="431" x2="662.5" y2="738"/><line x1="692.5" y1="431" x2="692.5" y2="738"/><line x1="718.5" y1="431" x2="718.5" y2="738"/><line x1="740.5" y1="431" x2="740.5" y2="738"/><line x1="759.5" y1="431" x2="759.5" y2="738"/><line x1="776.5" y1="431" x2="776.5" y2="738"/><line x1="891.5" y1="431" x2="891.5" y2="738"/><line x1="958.5" y1="431" x2="958.5" y2="738"/><line x1="1005.5" y1="431" x2="1005.5" y2="738"/><line x1="547" y1="450.5" x2="1030" y2="450.5"/><line x1="547" y1="469.5" x2="1030" y2="469.5"/><line x1="547" y1="487.5" x2="1030" y2="487.5"/><line x1="547" y1="505.5" x2="1030" y2="505.5"/><line x1="547" y1="523.5" x2="1030" y2="523.5"/><line x1="547" y1="542.5" x2="1030" y2="542.5"/><line x1="547" y1="560.5" x2="1030" y2="560.5"/><line x1="547" y1="578.5" x2="1030" y2="578.5"/><line x1="547" y1="597.5" x2="1030" y2="597.5"/><line x1="547" y1="615.5" x2="1030" y2="615.5"/><line x1="547" y1="633.5" x2="1030" y2="633.5"/><line x1="547" y1="651.5" x2="1030" y2="651.5"/><line x1="547" y1="670.5" x2="1030" y2="670.5"/><line x1="547" y1="688.5" x2="1030" y2="688.5"/><line x1="547" y1="706.5" x2="1030" y2="706.5"/><line x1="547" y1="725.5" x2="1030" y2="725.5"/></g><polyline points="547.0,687.0 549.3,686.7 552.3,686.3 555.9,685.8 559.9,685.2 564.2,684.6 568.8,683.9 573.4,683.2 578.0,682.4 582.7,681.5 587.7,680.6 592.9,679.5 598.2,678.4 603.6,677.3 609.1,676.2 614.6,675.1 620.0,674.0 625.5,672.9 631.2,671.8 637.0,670.7 642.9,669.6 648.5,668.5 654.0,667.5 659.1,666.5 663.7,665.6 667.8,664.8 671.4,664.1 674.6,663.4 677.6,662.7 680.4,662.2 683.3,661.6 686.3,661.0 689.5,660.5 693.0,660.0 696.7,659.5 700.4,659.1 704.2,658.7 707.9,658.3 711.4,657.9 714.8,657.5 717.8,657.0 720.5,656.5 722.9,656.0 725.1,655.5 727.2,655.0 729.1,654.5 731.0,654.0 733.0,653.5 735.0,653.0 737.1,652.5 739.2,651.9 741.4,651.3 743.5,650.8 745.6,650.2 747.5,649.8 749.3,649.3 751.0,649.0 752.5,648.8 753.8,648.6 755.0,648.5 756.1,648.5 757.1,648.5 758.1,648.5 759.0,648.5 760.0,648.5 761.0,648.5 761.9,648.5 762.7,648.4 763.6,648.4 764.4,648.5 765.2,648.6 765.9,648.7 766.7,649.0 767.4,649.4 768.0,649.9 768.7,650.5 769.2,651.2 769.8,651.8 770.5,652.4 771.1,652.9 771.9,653.3 772.7,653.5 773.6,653.7 774.5,653.7 775.4,653.7 776.4,653.7 777.4,653.6 778.5,653.5 779.6,653.3 780.7,653.1 781.8,652.8 783.0,652.5 784.2,652.2 785.4,651.8 786.8,651.4 788.3,651.0 790.0,650.5 791.9,650.0 794.0,649.5 796.2,649.0 798.5,648.4 800.9,647.8 803.3,647.2 805.7,646.5 808.0,645.8 810.3,645.0 812.5,644.2 814.8,643.2 817.1,642.3 819.3,641.4 821.5,640.5 823.7,639.7 825.7,639.0 827.7,638.4 829.5,638.0 831.3,637.6 833.1,637.2 834.8,636.9 836.5,636.6 838.3,636.3 840.0,636.0 841.8,635.6 843.6,635.3 845.4,634.9 847.1,634.6 848.9,634.3 850.6,634.0 852.3,633.7 854.0,633.5 855.6,633.3 857.3,633.2 859.0,633.1 860.6,633.1 862.1,633.0 863.6,633.0 864.9,633.0 866.0,633.0 866.9,633.0 867.7,632.9 868.3,632.9 868.8,632.8 869.3,632.9 869.7,633.0 870.2,633.2 870.8,633.5 871.4,634.0 872.0,634.6 872.6,635.4 873.1,636.2 873.8,637.1 874.4,638.0 875.2,638.8 876.0,639.5 876.9,640.1 877.9,640.8 879.0,641.4 880.1,641.9 881.3,642.5 882.5,643.0 883.7,643.5 885.0,644.0 886.4,644.5 887.8,645.0 889.3,645.5 890.9,645.9 892.4,646.3 893.9,646.6 895.3,646.9 896.5,647.0 897.5,647.0 898.5,646.9 899.3,646.7 900.0,646.5 900.7,646.2 901.5,645.8 902.2,645.4 903.0,645.0 903.8,644.5 904.7,644.1 905.5,643.5 906.4,642.9 907.3,642.3 908.1,641.6 909.1,640.8 910.0,640.0 911.0,639.1 912.0,638.1 913.1,637.1 914.2,636.0 915.2,634.8 916.3,633.6 917.4,632.3 918.4,631.0 919.4,629.6 920.4,628.1 921.4,626.6 922.4,625.1 923.3,623.4 924.2,621.7 925.1,619.9 926.0,618.0 926.8,616.0 927.6,613.7 928.4,611.4 929.2,609.0 929.9,606.6 930.6,604.3 931.2,602.0 931.8,600.0 932.3,598.1 932.7,596.4 933.1,594.8 933.4,593.2 933.8,591.7 934.1,590.2 934.5,588.6 935.0,587.0 935.5,585.3 936.1,583.5 936.7,581.7 937.4,579.9 938.0,578.1 938.7,576.4 939.3,574.7 940.0,573.0 940.6,571.4 941.2,569.9 941.8,568.4 942.4,566.9 943.0,565.5 943.8,564.0 944.6,562.5 945.5,561.0 946.5,559.4 947.7,557.8 948.9,556.1 950.1,554.5 951.5,552.8 952.9,551.2 954.4,549.6 956.0,548.0 957.7,546.4 959.6,544.8 961.7,543.2 963.8,541.7 965.8,540.2 967.9,538.8 969.8,537.5 971.5,536.4 973.1,535.5 974.5,534.7 975.9,534.1 977.2,533.6 978.5,533.1 979.7,532.7 980.9,532.4 982.0,532.0 983.1,531.6 984.1,531.3 985.1,531.1 986.0,530.9 986.9,530.7 987.8,530.6 988.7,530.5 989.7,530.5 990.7,530.6 991.8,530.7 992.8,530.9 993.9,531.2 994.9,531.5 996.0,531.8 997.0,532.1 998.0,532.5 999.0,532.9 999.9,533.4 1000.8,533.9 1001.7,534.4 1002.7,534.9 1003.5,535.4 1004.4,535.9 1005.3,536.4 1006.2,536.8 1007.1,537.3 1007.9,537.7 1008.8,538.1 1009.6,538.5 1010.5,538.9 1011.2,539.2 1012.0,539.5 1012.7,539.7 1013.4,539.9 1014.1,540.1 1014.7,540.2 1015.3,540.3 1015.9,540.3 1016.5,540.3 1017.0,540.3 1017.5,540.3 1017.9,540.2 1018.3,540.1 1018.7,539.9 1019.0,539.8 1019.4,539.6 1019.7,539.3 1020.0,539.0 1020.3,538.7 1020.6,538.5 1020.8,538.2 1021.0,537.9 1021.2,537.5 1021.5,536.9 1021.7,536.1 1022.0,535.0 1022.3,533.6 1022.7,531.8 1023.0,529.7 1023.4,527.5 1023.8,525.3 1024.2,523.2 1024.5,521.2 1024.8,519.5 1025.1,518.1 1025.3,516.8 1025.5,515.7 1025.7,514.7 1025.9,513.7 1026.1,512.8 1026.3,511.9 1026.5,511.0 1026.7,510.1 1026.9,509.2 1027.1,508.3 1027.4,507.5 1027.6,506.7 1027.7,506.0 1027.9,505.4 1028.0,505.0" fill="none" stroke="#fff" stroke-width="1.1" stroke-linejoin="round"/><polyline points="547.0,691.4 549.1,691.2 551.9,691.0 555.1,690.7 558.8,690.4 562.8,690.0 567.0,689.6 571.5,689.2 576.0,688.8 580.8,688.3 586.0,687.8 591.4,687.3 597.1,686.7 602.9,686.2 608.7,685.6 614.4,685.0 620.0,684.5 625.6,684.0 631.5,683.4 637.4,682.9 643.3,682.4 649.0,681.8 654.4,681.3 659.4,680.8 663.7,680.3 667.4,679.8 670.5,679.3 673.2,678.9 675.6,678.4 677.7,678.0 679.8,677.6 681.8,677.1 684.0,676.7 686.2,676.3 688.3,675.9 690.2,675.5 692.2,675.1 694.1,674.7 696.0,674.3 697.9,673.9 700.0,673.5 702.2,673.1 704.5,672.6 706.8,672.1 709.1,671.6 711.5,671.1 713.7,670.7 715.8,670.3 717.8,670.0 719.6,669.8 721.3,669.6 722.8,669.4 724.3,669.3 725.8,669.2 727.2,669.2 728.6,669.1 730.0,669.0 731.4,668.9 732.6,668.8 733.8,668.8 735.0,668.7 736.2,668.6 737.6,668.6 739.2,668.5 741.0,668.5 743.2,668.5 745.8,668.4 748.7,668.4 751.7,668.4 754.6,668.4 757.3,668.4 759.7,668.4 761.6,668.5 763.0,668.6 764.0,668.8 764.8,668.9 765.3,669.1 765.7,669.3 766.0,669.6 766.5,669.8 767.0,670.0 767.6,670.2 768.2,670.5 768.8,670.8 769.4,671.1 770.0,671.4 770.6,671.6 771.2,671.8 771.9,672.0 772.6,672.1 773.3,672.2 774.0,672.3 774.7,672.4 775.4,672.4 776.3,672.3 777.2,672.2 778.3,672.0 779.5,671.7 780.7,671.3 781.9,670.9 783.3,670.4 784.8,669.8 786.4,669.2 788.1,668.6 790.0,668.0 792.1,667.3 794.5,666.6 797.1,665.9 799.7,665.1 802.5,664.3 805.1,663.5 807.6,662.7 810.0,661.8 812.2,660.9 814.3,660.0 816.3,659.0 818.2,658.1 820.1,657.1 822.0,656.1 823.8,655.0 825.7,654.0 827.6,652.9 829.4,651.9 831.3,650.8 833.1,649.6 834.9,648.5 836.7,647.4 838.4,646.2 840.0,645.0 841.6,643.8 843.1,642.5 844.6,641.2 846.0,640.0 847.4,638.6 848.8,637.3 850.1,636.1 851.5,634.8 852.9,633.5 854.2,632.3 855.6,631.0 856.9,629.8 858.2,628.5 859.5,627.3 860.8,626.2 862.0,625.0 863.2,623.8 864.5,622.6 865.7,621.4 866.9,620.3 868.0,619.2 869.0,618.2 870.0,617.4 870.8,616.7 871.5,616.2 872.0,616.0 872.4,615.8 872.8,615.8 873.1,615.8 873.4,615.9 873.7,616.0 874.0,616.0 874.3,616.1 874.6,616.3 874.9,616.6 875.2,616.9 875.5,617.1 875.8,617.3 876.1,617.2 876.5,617.0 876.9,616.5 877.4,615.9 877.9,615.1 878.4,614.2 878.9,613.2 879.4,612.1 880.0,611.1 880.5,610.0 881.0,609.0 881.6,608.0 882.1,607.0 882.6,605.9 883.2,604.7 883.8,603.3 884.4,601.8 885.0,600.0 885.7,597.8 886.4,595.3 887.1,592.5 887.9,589.6 888.7,586.7 889.5,583.9 890.2,581.3 891.0,579.0 891.7,577.1 892.5,575.3 893.2,573.8 893.9,572.3 894.7,571.0 895.4,569.6 896.2,568.3 897.0,567.0 897.8,565.6 898.7,564.3 899.6,563.0 900.4,561.8 901.3,560.6 902.2,559.3 903.1,558.2 904.0,557.0 904.9,555.9 905.7,554.7 906.6,553.6 907.4,552.6 908.3,551.5 909.1,550.5 910.1,549.5 911.0,548.5 912.0,547.6 913.0,546.6 914.1,545.7 915.2,544.9 916.3,544.0 917.4,543.2 918.5,542.4 919.5,541.6 920.5,540.8 921.4,540.1 922.4,539.3 923.3,538.6 924.2,537.9 925.1,537.2 926.0,536.6 927.0,536.0 928.0,535.5 928.9,535.0 929.9,534.5 930.8,534.1 931.8,533.7 932.8,533.3 933.9,532.9 935.0,532.5 936.1,532.1 937.3,531.6 938.6,531.1 939.8,530.7 941.1,530.2 942.4,529.8 943.7,529.4 945.0,529.0 946.3,528.7 947.7,528.3 949.0,528.0 950.4,527.7 951.8,527.4 953.2,527.2 954.6,527.0 956.0,526.8 957.5,526.7 959.0,526.6 960.5,526.5 962.0,526.4 963.5,526.4 965.0,526.4 966.5,526.3 968.0,526.3 969.4,526.3 970.8,526.3 972.2,526.2 973.6,526.2 974.9,526.2 976.3,526.2 977.6,526.1 979.0,526.0 980.4,525.8 981.7,525.5 983.1,525.2 984.5,524.9 985.8,524.6 987.1,524.3 988.4,524.1 989.7,524.0 990.9,524.0 992.1,524.1 993.3,524.3 994.5,524.5 995.6,524.8 996.7,525.0 997.9,525.3 999.0,525.5 1000.2,525.7 1001.4,526.0 1002.6,526.3 1003.8,526.6 1004.9,526.8 1006.0,527.1 1007.1,527.2 1008.0,527.3 1008.8,527.3 1009.5,527.2 1010.2,527.1 1010.8,526.9 1011.3,526.7 1011.8,526.5 1012.4,526.2 1013.0,526.0 1013.6,525.7 1014.3,525.4 1015.0,525.1 1015.6,524.8 1016.3,524.4 1016.9,524.1 1017.5,523.7 1018.0,523.4 1018.5,523.1 1018.9,522.8 1019.3,522.6 1019.7,522.3 1020.0,522.0 1020.3,521.7 1020.7,521.4 1021.0,521.0 1021.3,520.6 1021.7,520.2 1022.0,519.8 1022.3,519.4 1022.6,518.9 1022.9,518.4 1023.2,517.8 1023.5,517.0 1023.8,516.1 1024.1,515.1 1024.3,513.9 1024.6,512.7 1024.8,511.4 1025.1,510.2 1025.3,509.1 1025.5,508.0 1025.7,507.0 1025.8,506.2 1025.9,505.3 1026.0,504.5 1026.2,503.7 1026.3,502.8 1026.4,502.0 1026.6,501.0 1026.8,499.9 1027.1,498.7 1027.4,497.4 1027.7,496.1 1028.0,494.8 1028.3,493.7 1028.5,492.7 1028.7,492.0" fill="none" stroke="#00ff00" stroke-width="1.1" stroke-linejoin="round"/></g></svg><svg style="left:557px;top:441px" width="23" height="23" viewBox="0 0 23 23" ><rect x="0.6" y="0.6" width="21.8" height="21.8" rx="3" ry="3" fill="#000" stroke="#fff" stroke-width="1.2"/><line x1="6.5" y1="3" x2="6.5" y2="19" stroke="#787878" stroke-width="1" shape-rendering="crispEdges"/><line x1="13.5" y1="3" x2="13.5" y2="19" stroke="#787878" stroke-width="1" shape-rendering="crispEdges"/><line x1="16.5" y1="3" x2="16.5" y2="19" stroke="#787878" stroke-width="1" shape-rendering="crispEdges"/><line x1="19.5" y1="3" x2="19.5" y2="19" stroke="#787878" stroke-width="1" shape-rendering="crispEdges"/><line x1="3" y1="5.5" x2="21" y2="5.5" stroke="#787878" stroke-width="1" shape-rendering="crispEdges"/><line x1="3" y1="10.5" x2="21" y2="10.5" stroke="#787878" stroke-width="1" shape-rendering="crispEdges"/><line x1="3" y1="15.5" x2="21" y2="15.5" stroke="#787878" stroke-width="1" shape-rendering="crispEdges"/><polyline points="3,19.4 4,18.4 5,19.4 6.5,18.6 8,19.4 9.2,18.2 11.8,18.2 13,19.2 14.5,18.6 15.5,19.3 17.6,18.6 18.6,19.3 20,19 21,19.5" fill="none" stroke="#00ee00" stroke-width="0.9"/><line x1="3" y1="19.9" x2="21" y2="19.9" stroke="#00ee00" stroke-width="0.9"/><g shape-rendering="crispEdges" stroke="#00ff00" stroke-width="1"><line x1="10.5" y1="3" x2="10.5" y2="19"/><line x1="16.5" y1="12" x2="16.5" y2="19"/><line x1="19.5" y1="15" x2="19.5" y2="19"/></g></svg><div class="t" style="left:597.5px;top:437.5px;color:#fff">Left channel</div><div class="t" style="left:597.5px;top:453.5px;color:#00ff00">Right channel</div><div class="t" style="left:1033px;top:431px;">dB</div><div class="t" style="left:1032px;top:462.1px;">-12</div><div class="t" style="left:1032px;top:480.38px;">-18</div><div class="t" style="left:1032px;top:498.66px;">-24</div><div class="t" style="left:1032px;top:516.94px;">-30</div><div class="t" style="left:1032px;top:535.22px;">-36</div><div class="t" style="left:1032px;top:553.5px;">-42</div><div class="t" style="left:1032px;top:571.78px;">-48</div><div class="t" style="left:1032px;top:590.0600000000001px;">-54</div><div class="t" style="left:1032px;top:608.34px;">-60</div><div class="t" style="left:1032px;top:626.62px;">-66</div><div class="t" style="left:1032px;top:644.9000000000001px;">-72</div><div class="t" style="left:1032px;top:663.1800000000001px;">-78</div><div class="t" style="left:1032px;top:681.46px;">-84</div><div class="t" style="left:1032px;top:699.74px;">-90</div><div class="t" style="left:1032px;top:718.02px;">-96</div><div class="t" style="left:548.25px;top:739px;width:60px;text-align:center">3K</div><div class="t" style="left:632.5081551042922px;top:739px;width:60px;text-align:center">5K</div><div class="t" style="left:746.8393474574723px;top:739px;width:60px;text-align:center">10K</div><div class="t" style="left:928.05px;top:739px;width:60px;text-align:center">30K</div><div class="t" style="left:1031px;top:739px;">Hz</div><div class="dith" style="left:1057px;top:429px;width:18px;height:308px;"></div><div class="btn" style="left:1057px;top:429px;width:18px;height:16px;"></div><svg style="left:1057px;top:429px" width="18" height="16" viewBox="0 0 18 16" ><polygon points="5.0,9.5 12.0,9.5 8.5,5.5" fill="#000"/></svg><div class="btn" style="left:1057px;top:459px;width:18px;height:129px;"></div><div class="btn" style="left:1057px;top:721.5px;width:18px;height:15.5px;"></div><svg style="left:1057px;top:721.5px" width="18" height="15.5" viewBox="0 0 18 15.5" ><polygon points="5.0,5.75 12.0,5.75 8.5,9.75" fill="#000"/></svg><div class="btn" style="left:1057px;top:737px;width:18px;height:18px;"></div><svg style="left:1057px;top:737px" width="18" height="18" viewBox="0 0 18 18" ><circle cx="7.8" cy="7.6" r="4.7" fill="#d4d0c8" stroke="#000" stroke-width="2.1"/><line x1="11.4" y1="11.2" x2="14.399999999999999" y2="14.399999999999999" stroke="#000" stroke-width="2.6"/><line x1="5.199999999999999" y1="7.6" x2="10.4" y2="7.6" stroke="#000" stroke-width="2"/><line x1="7.8" y1="5.0" x2="7.8" y2="10.2" stroke="#000" stroke-width="2"/></svg><div class="dith" style="left:545px;top:755px;width:459px;height:18px;"></div><div class="btn" style="left:545px;top:755px;width:16px;height:18px;"></div><svg style="left:545px;top:755px" width="16" height="18" viewBox="0 0 16 18" ><polygon points="9.0,5.0 9.0,12.0 5.0,8.5" fill="#000"/></svg><div class="btn" style="left:563px;top:755px;width:441px;height:18px;"></div><div class="btn" style="left:1004px;top:755px;width:16px;height:18px;"></div><svg style="left:1004px;top:755px" width="16" height="18" viewBox="0 0 16 18" ><polygon points="6.0,5.0 6.0,12.0 10.0,8.5" fill="#000"/></svg><div class="btn" style="left:1020px;top:755px;width:18px;height:18px;"></div><svg style="left:1020px;top:755px" width="18" height="18" viewBox="0 0 18 18" ><circle cx="7.8" cy="7.6" r="4.7" fill="#d4d0c8" stroke="#000" stroke-width="2.1"/><line x1="11.4" y1="11.2" x2="14.399999999999999" y2="14.399999999999999" stroke="#000" stroke-width="2.6"/><line x1="5.199999999999999" y1="7.6" x2="10.4" y2="7.6" stroke="#000" stroke-width="2"/><line x1="7.8" y1="5.0" x2="7.8" y2="10.2" stroke="#000" stroke-width="2"/></svg><div class="btn" style="left:1038px;top:755px;width:18px;height:18px;"></div><svg style="left:1038px;top:755px" width="18" height="18" viewBox="0 0 18 18" ><circle cx="7.8" cy="7.6" r="4.7" fill="#d4d0c8" stroke="#000" stroke-width="2.1"/><line x1="11.4" y1="11.2" x2="14.399999999999999" y2="14.399999999999999" stroke="#000" stroke-width="2.6"/><line x1="5.199999999999999" y1="7.6" x2="10.4" y2="7.6" stroke="#000" stroke-width="2"/></svg><div class="btn" style="left:1057px;top:755px;width:18px;height:18px;"></div><svg style="left:1057px;top:755px" width="18" height="18" viewBox="0 0 18 18" ><circle cx="7.8" cy="7.6" r="4.7" fill="#d4d0c8" stroke="#000" stroke-width="2.1"/><line x1="11.4" y1="11.2" x2="14.399999999999999" y2="14.399999999999999" stroke="#000" stroke-width="2.6"/><line x1="5.199999999999999" y1="7.6" x2="10.4" y2="7.6" stroke="#000" stroke-width="2"/></svg><div style="left:546px;top:773px;width:529px;height:1px;background:rgba(120,125,105,0.35)"></div><div class="sunk1" style="left:545px;top:779px;width:274px;height:22px;background:#d4d0c8"></div><div style="left:545px;top:779px;width:274px;height:22px;box-shadow:inset 1px 1px 0 #808080, inset 2px 2px 0 #404040, inset -1px -1px 0 #fff"></div><div class="t" style="left:548.4px;top:782px;">Cursor:  3395 Hz,  left = -80.78 dB,  right = -83.45 dB</div><div class="btn" style="left:830px;top:777px;width:27px;height:26px;"></div><div style="left:829px;top:777.5px;width:27px;height:26px;text-align:center;font-family:'Liberation Serif',serif;font-weight:bold;font-size:25px;line-height:26px;color:#000">A</div><div class="btn" style="left:858px;top:777px;width:27px;height:26px;"></div><div style="left:861px;top:779px;width:21px;height:22px;background:#c8c8c8"></div><svg style="left:858px;top:777px" width="27" height="26" viewBox="0 0 27 26" ><g fill="#0000e6"><polygon points="10,5.3 12,2.2 17.3,2.2 20,5 22,3.1 22,9.8 15.1,9.8 17,7.8 14.8,5.3"/><polygon points="3.9,5.3 10,5.3 10,9.5 7.4,9.5 7.4,12 10.5,15.3 8.6,17.8 3.9,14.5"/><polygon points="10,17.6 14.8,13.4 14.8,15.3 19,15.3 22,11.2 22,17.3 19.5,20.3 16.2,20.3 16.2,22.9 14.8,22.9"/></g></svg><div class="btn" style="left:886px;top:777px;width:27px;height:26px;"></div><svg style="left:886px;top:777px" width="27" height="26" viewBox="0 0 27 26" ><defs><linearGradient id="wg" x1="0" y1="0" x2="1" y2="1"><stop offset="0" stop-color="#ffffff"/><stop offset="0.45" stop-color="#c8c8c8"/><stop offset="1" stop-color="#707070"/></linearGradient></defs><path d="M2,20.2 L10,12.8 L9.8,5.9 L12.3,2.8 L20.1,2.2 L21.5,3.6 L20.9,5.3 L18.4,3.9 L14.5,4.5 L13.1,7.3 L13.9,11.2 L16.2,12.5 L19.5,12 L20.9,9.8 L20.9,7.3 L22.6,5.9 L23.7,7.3 L23.4,12.8 L20.4,15.9 L13.9,16.7 L5.8,23.7 Z" fill="url(#wg)" stroke="#484848" stroke-width="1" stroke-linejoin="round"/><path d="M2.6,19.8 L10.8,12.4 L10.6,6.2 L12.8,3.6 L19.6,3.1" fill="none" stroke="#fff" stroke-width="1.1"/><path d="M6.2,22.6 L14.2,15.8 L20,15 L22.6,12.4 L22.8,7.8" fill="none" stroke="#303030" stroke-width="1.1"/><path d="M13.6,7.4 L14.8,5 L18,4.6" fill="none" stroke="#303030" stroke-width="1"/></svg><div class="btn" style="left:914px;top:777px;width:27px;height:26px;"></div><svg style="left:917px;top:780px" width="21" height="20" viewBox="0 0 21 20"><rect x="0.5" y="0.5" width="20" height="19" fill="#808000" stroke="#000" stroke-width="1"/><rect x="4" y="1" width="12" height="8" fill="#d4d0c8"/><rect x="3" y="11" width="14" height="8.5" fill="#000"/><rect x="13" y="12.5" width="3" height="6" fill="#d4d0c8"/><rect x="17.5" y="2" width="1.5" height="1.5" fill="#d4d0c8"/></svg><div style="left:949px;top:782px;width:30px;height:15px;background:#d3dbc2"></div><div class="t" style="left:951px;top:783px;">Scale</div><div class="sunk" style="left:983px;top:779px;width:71px;height:20.5px;background:#fff"></div><div class="t" style="left:988px;top:783px;">Log</div><div class="btn" style="left:1036px;top:781px;width:16px;height:16.5px;"></div><svg style="left:1036px;top:781px" width="16" height="16.5" viewBox="0 0 16 16.5" ><polygon points="4.0,6.25 11.0,6.25 7.5,10.25" fill="#000"/></svg><svg style="left:1066px;top:793.5px" width="12" height="12" viewBox="0 0 12 12" ><rect x="9" y="1" width="2" height="2" fill="#fff"/><rect x="8" y="0" width="2" height="2" fill="#707040"/><rect x="5" y="5" width="2" height="2" fill="#fff"/><rect x="4" y="4" width="2" height="2" fill="#707040"/><rect x="9" y="5" width="2" height="2" fill="#fff"/><rect x="8" y="4" width="2" height="2" fill="#707040"/><rect x="1" y="9" width="2" height="2" fill="#fff"/><rect x="0" y="8" width="2" height="2" fill="#707040"/><rect x="5" y="9" width="2" height="2" fill="#fff"/><rect x="4" y="8" width="2" height="2" fill="#707040"/><rect x="9" y="9" width="2" height="2" fill="#fff"/><rect x="8" y="8" width="2" height="2" fill="#707040"/></svg>
</div></body></html>
